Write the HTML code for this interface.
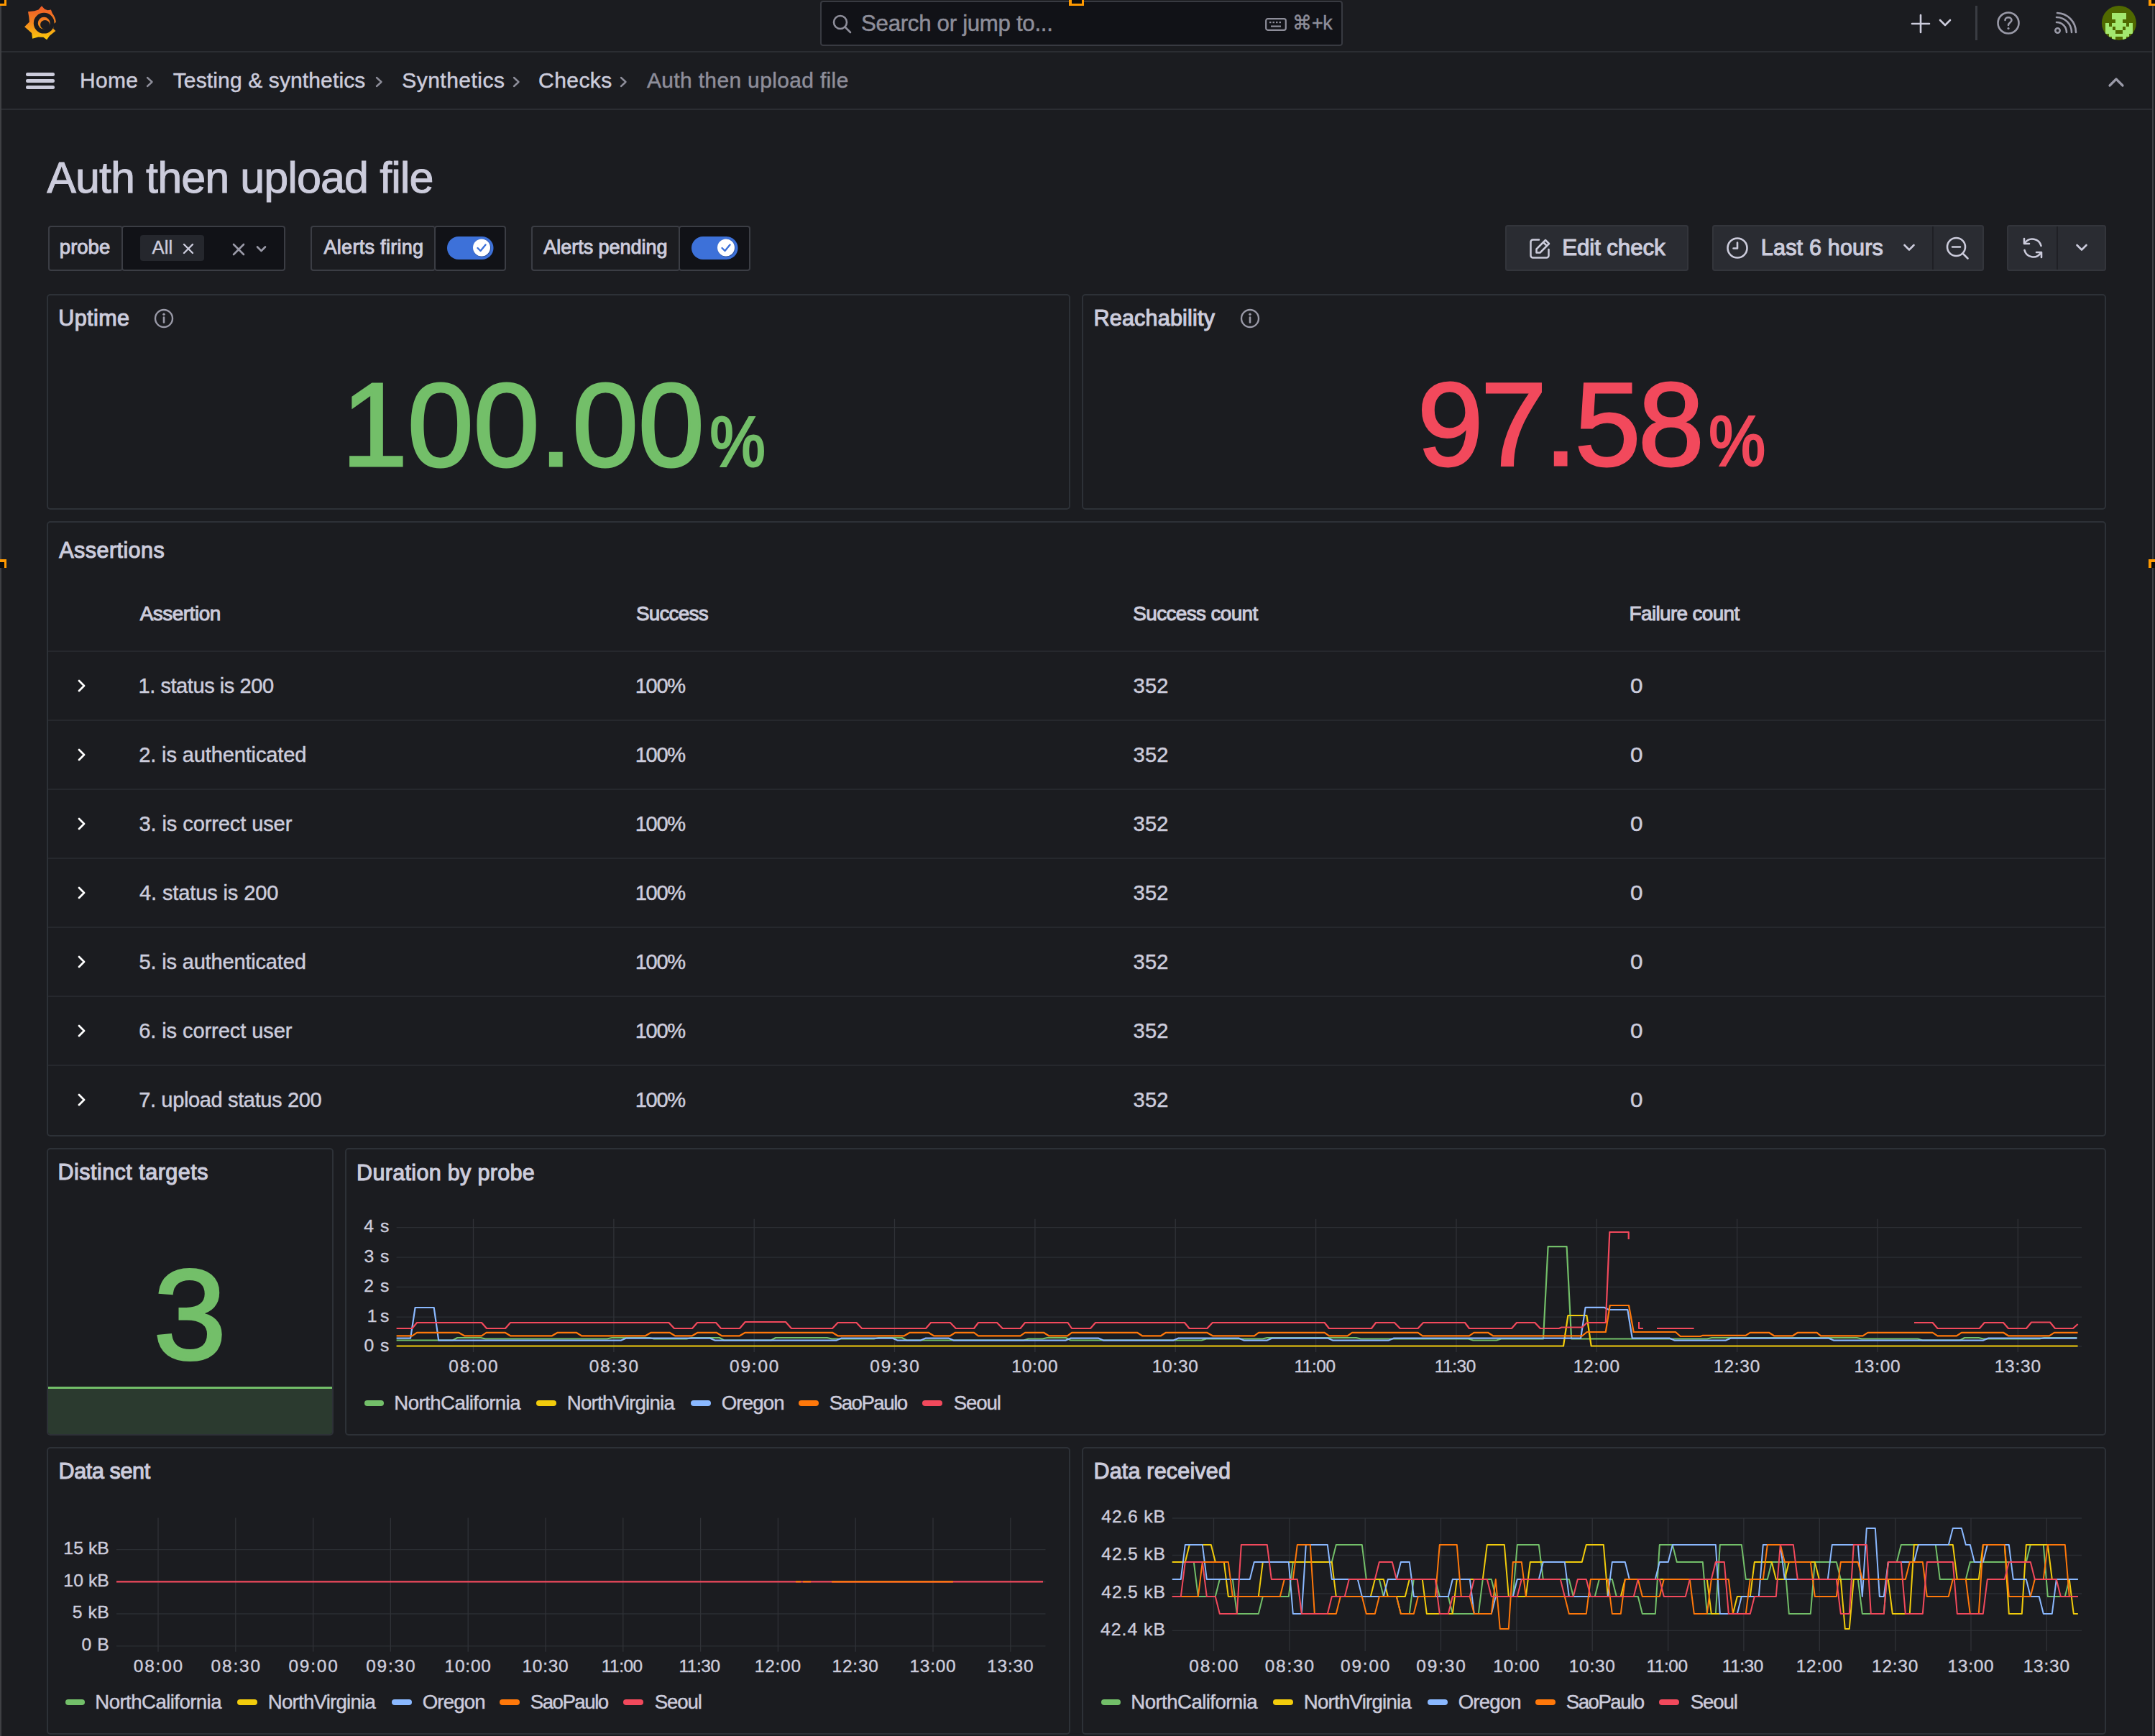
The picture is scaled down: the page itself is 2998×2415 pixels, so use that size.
<!DOCTYPE html><html><head><meta charset="utf-8"><style>
html,body{margin:0;padding:0;}
body{width:2998px;height:2415px;overflow:hidden;background:#1b1c20;position:relative;font-family:"Liberation Sans",sans-serif;}
.t{position:absolute;white-space:nowrap;line-height:1;}
.b{position:absolute;box-sizing:border-box;}
.s{position:absolute;overflow:visible;}
</style></head><body>
<div class="b" style="left:0.0px;top:0.0px;width:2.0px;height:2415.0px;background:#3f4044;"></div>
<div class="b" style="left:2994.0px;top:0.0px;width:2.0px;height:2415.0px;background:#3f4044;"></div>
<div class="b" style="left:2.0px;top:70.5px;width:2992.0px;height:2.0px;background:#2b2d32;"></div>
<div class="b" style="left:2.0px;top:150.5px;width:2992.0px;height:2.0px;background:#2b2d32;"></div>
<svg class="s" style="left:28.0px;top:4.0px;" width="56.0" height="56.0" viewBox="0 0 56.0 56.0"><defs><linearGradient id="lg" x1="0" y1="0" x2="0" y2="1"><stop offset="0" stop-color="#f05a28"/><stop offset="0.45" stop-color="#f38020"/><stop offset="1" stop-color="#fbca0a"/></linearGradient></defs>
<path fill="url(#lg)" d="M30 4.2 L34.2 8.7 L38.4 10.3 L42.9 9.4 L44.8 14.5 C47.5 18 49.5 22 49.8 26.8 L46.6 29.5 L46.2 36 L49.4 39 L41 45.8 L37.1 51.3 L32.3 47.7 L25.2 47.4 L17.1 49.7 L16.1 42 L6.1 33.2 L12.9 26.5 L12.3 20 L11 12.3 L20 11.3 L25.5 9.4 Z"/>
<circle cx="33.2" cy="28.2" r="11.4" fill="none" stroke="#1b1c20" stroke-width="6"/>
<circle cx="34.6" cy="30.4" r="6.5" fill="#1b1c20"/>
<path d="M36.5 37.5 L40 34" stroke="#1b1c20" stroke-width="1.6"/></svg>
<div class="b" style="left:36.0px;top:101.0px;width:40.0px;height:4.5px;background:#ccccdc;border-radius:2.2px;"></div>
<div class="b" style="left:36.0px;top:110.0px;width:40.0px;height:4.5px;background:#ccccdc;border-radius:2.2px;"></div>
<div class="b" style="left:36.0px;top:119.0px;width:40.0px;height:4.5px;background:#ccccdc;border-radius:2.2px;"></div>
<div class="b" style="left:1141.0px;top:0.5px;width:727.0px;height:63.0px;background:#111217;box-shadow:inset 0 0 0 2.0px #383a41;border-radius:4.0px;"></div>
<svg class="s" style="left:1158.0px;top:20.0px;" width="30.0" height="26.0" viewBox="0 0 30.0 26.0"><circle cx="11" cy="11" r="9" fill="none" stroke="#8e8e9a" stroke-width="2.6"/><line x1="17.5" y1="17.5" x2="25" y2="25" stroke="#8e8e9a" stroke-width="2.6" stroke-linecap="round"/></svg>
<div class="t" style="left:1198.08px;top:17.04px;font-size:31.25px;color:#8e8e9a;letter-spacing:-0.311px;-webkit-text-stroke:0.50px #8e8e9a;">Search or jump to...</div>
<svg class="s" style="left:1760.0px;top:25.0px;" width="30.0" height="18.0" viewBox="0 0 30.0 18.0"><rect x="1.2" y="1.2" width="27.6" height="15.6" rx="2.5" fill="none" stroke="#8e8e9a" stroke-width="2.2"/><g fill="#8e8e9a"><rect x="6" y="5" width="2.5" height="2.2"/><rect x="10.5" y="5" width="2.5" height="2.2"/><rect x="15" y="5" width="2.5" height="2.2"/><rect x="19.5" y="5" width="2.5" height="2.2"/><rect x="8" y="10.5" width="14" height="2.2"/></g></svg>
<div class="t" style="left:1798.31px;top:19.24px;font-size:26.89px;color:#8e8e9a;letter-spacing:-0.331px;-webkit-text-stroke:0.43px #8e8e9a;">⌘+k</div>
<div class="b" style="left:1487.0px;top:0.0px;width:21.0px;height:8.0px;background:#ff9900;"></div>
<div class="b" style="left:2989.0px;top:0.0px;width:9.0px;height:8.0px;background:#ff9900;"></div>
<div class="b" style="left:2992.5px;top:0.0px;width:5.5px;height:4.5px;background:#0c0c0c;"></div>
<div class="b" style="left:1490.5px;top:0.0px;width:14.0px;height:4.5px;background:#0c0c0c;"></div>
<div class="b" style="left:0.0px;top:0.0px;width:9.0px;height:8.0px;background:#ff9900;"></div>
<div class="b" style="left:0.0px;top:0.0px;width:5.5px;height:4.5px;background:#0c0c0c;"></div>
<div class="b" style="left:0.0px;top:778.0px;width:9.0px;height:12.0px;background:#ff9900;"></div>
<div class="b" style="left:0.0px;top:781.5px;width:5.5px;height:8.5px;background:#0c0c0c;"></div>
<div class="b" style="left:2989.0px;top:778.0px;width:9.0px;height:12.0px;background:#ff9900;"></div>
<div class="b" style="left:2992.5px;top:781.5px;width:5.5px;height:8.5px;background:#0c0c0c;"></div>
<svg class="s" style="left:2658.0px;top:19.0px;" width="28.0" height="28.0" viewBox="0 0 28.0 28.0"><path d="M14 2 V26 M2 14 H26" stroke="#ccccdc" stroke-width="2.6" stroke-linecap="round"/></svg>
<svg class="s" style="left:2697.0px;top:26.0px;" width="18.0" height="12.0" viewBox="0 0 18.0 12.0"><path d="M2 2 L9 9 L16 2" fill="none" stroke="#ccccdc" stroke-width="2.6" stroke-linecap="round" stroke-linejoin="round"/></svg>
<div class="b" style="left:2748.0px;top:8.0px;width:2.5px;height:48.0px;background:#3a3c42;"></div>
<svg class="s" style="left:2777.0px;top:15.0px;" width="34.0" height="34.0" viewBox="0 0 34.0 34.0"><circle cx="17" cy="17" r="14.5" fill="none" stroke="#9a9aa8" stroke-width="2.6"/><path d="M12.5 13 C12.5 8 21.5 8 21.5 13 C21.5 16.5 17 16.5 17 20" fill="none" stroke="#9a9aa8" stroke-width="2.6" stroke-linecap="round"/><circle cx="17" cy="24.5" r="1.6" fill="#9a9aa8"/></svg>
<svg class="s" style="left:2857.0px;top:19.0px;" width="32.0" height="30.0" viewBox="0 0 32.0 30.0"><circle cx="5.5" cy="23.5" r="3.2" fill="none" stroke="#9a9aa8" stroke-width="2.6"/><path d="M4 12 A14 14 0 0 1 18 26 M4 5 A21 21 0 0 1 25 26 M5 -1 A27 27 0 0 1 31 26" fill="none" stroke="#9a9aa8" stroke-width="2.6" stroke-linecap="round"/></svg>
<svg class="s" style="left:2918.0px;top:4.0px;" width="60.0" height="56.0" viewBox="0 0 60.0 56.0"><clipPath id="av"><circle cx="29.9" cy="27.9" r="24"/></clipPath><g clip-path="url(#av)"><rect width="60" height="56" fill="#506900"/><g fill="#a3e86f" shape-rendering="crispEdges"><rect x="20.44" y="13.50" width="4.86" height="4.94"/><rect x="25.20" y="13.50" width="4.86" height="4.94"/><rect x="29.96" y="13.50" width="4.86" height="4.94"/><rect x="34.72" y="13.50" width="4.86" height="4.94"/><rect x="20.44" y="18.34" width="4.86" height="4.94"/><rect x="25.20" y="18.34" width="4.86" height="4.94"/><rect x="29.96" y="18.34" width="4.86" height="4.94"/><rect x="34.72" y="18.34" width="4.86" height="4.94"/><rect x="25.20" y="23.18" width="4.86" height="4.94"/><rect x="29.96" y="23.18" width="4.86" height="4.94"/><rect x="10.92" y="28.02" width="4.86" height="4.94"/><rect x="20.44" y="28.02" width="4.86" height="4.94"/><rect x="25.20" y="28.02" width="4.86" height="4.94"/><rect x="29.96" y="28.02" width="4.86" height="4.94"/><rect x="34.72" y="28.02" width="4.86" height="4.94"/><rect x="44.24" y="28.02" width="4.86" height="4.94"/><rect x="10.92" y="32.86" width="4.86" height="4.94"/><rect x="15.68" y="32.86" width="4.86" height="4.94"/><rect x="25.20" y="32.86" width="4.86" height="4.94"/><rect x="29.96" y="32.86" width="4.86" height="4.94"/><rect x="39.48" y="32.86" width="4.86" height="4.94"/><rect x="44.24" y="32.86" width="4.86" height="4.94"/><rect x="10.92" y="37.70" width="4.86" height="4.94"/><rect x="15.68" y="37.70" width="4.86" height="4.94"/><rect x="20.44" y="37.70" width="4.86" height="4.94"/><rect x="34.72" y="37.70" width="4.86" height="4.94"/><rect x="39.48" y="37.70" width="4.86" height="4.94"/><rect x="44.24" y="37.70" width="4.86" height="4.94"/><rect x="15.68" y="42.54" width="4.86" height="4.94"/><rect x="20.44" y="42.54" width="4.86" height="4.94"/><rect x="25.20" y="42.54" width="4.86" height="4.94"/><rect x="29.96" y="42.54" width="4.86" height="4.94"/><rect x="34.72" y="42.54" width="4.86" height="4.94"/><rect x="39.48" y="42.54" width="4.86" height="4.94"/><rect x="20.44" y="47.38" width="4.86" height="4.94"/><rect x="34.72" y="47.38" width="4.86" height="4.94"/></g></g></svg>
<svg class="s" style="left:2932.0px;top:106.0px;" width="24.0" height="16.0" viewBox="0 0 24.0 16.0"><path d="M3 13 L12 4 L21 13" fill="none" stroke="#9a9aa8" stroke-width="3.2" stroke-linecap="round" stroke-linejoin="round"/></svg>
<div class="t" style="left:110.94px;top:96.95px;font-size:29.94px;color:#ccccdc;letter-spacing:0.339px;-webkit-text-stroke:0.48px #ccccdc;">Home</div>
<div class="t" style="left:240.73px;top:96.95px;font-size:29.94px;color:#ccccdc;letter-spacing:0.159px;-webkit-text-stroke:0.48px #ccccdc;">Testing &amp; synthetics</div>
<div class="t" style="left:559.24px;top:96.95px;font-size:29.94px;color:#ccccdc;letter-spacing:0.501px;-webkit-text-stroke:0.48px #ccccdc;">Synthetics</div>
<div class="t" style="left:749.08px;top:96.95px;font-size:29.94px;color:#ccccdc;letter-spacing:0.472px;-webkit-text-stroke:0.48px #ccccdc;">Checks</div>
<div class="t" style="left:899.94px;top:96.95px;font-size:29.94px;color:#8e8e9a;letter-spacing:0.369px;-webkit-text-stroke:0.48px #8e8e9a;">Auth then upload file</div>
<svg class="s" style="left:202.6px;top:106.0px;" width="12.0" height="16.0" viewBox="0 0 12.0 16.0"><path d="M2 2 L8.5 8 L2 14" fill="none" stroke="#8e8e9a" stroke-width="2.4" stroke-linecap="round" stroke-linejoin="round"/></svg>
<svg class="s" style="left:522.0px;top:106.0px;" width="12.0" height="16.0" viewBox="0 0 12.0 16.0"><path d="M2 2 L8.5 8 L2 14" fill="none" stroke="#8e8e9a" stroke-width="2.4" stroke-linecap="round" stroke-linejoin="round"/></svg>
<svg class="s" style="left:712.8px;top:106.0px;" width="12.0" height="16.0" viewBox="0 0 12.0 16.0"><path d="M2 2 L8.5 8 L2 14" fill="none" stroke="#8e8e9a" stroke-width="2.4" stroke-linecap="round" stroke-linejoin="round"/></svg>
<svg class="s" style="left:861.8px;top:106.0px;" width="12.0" height="16.0" viewBox="0 0 12.0 16.0"><path d="M2 2 L8.5 8 L2 14" fill="none" stroke="#8e8e9a" stroke-width="2.4" stroke-linecap="round" stroke-linejoin="round"/></svg>
<div class="t" style="left:65.18px;top:217.32px;font-size:61.05px;color:#ccccdc;letter-spacing:-0.920px;-webkit-text-stroke:0.98px #ccccdc;">Auth then upload file</div>
<div class="b" style="left:67.0px;top:314.0px;width:104.0px;height:62.5px;background:#1b1c20;box-shadow:inset 0 0 0 2.0px #3b3d44;border-radius:4.0px;"></div>
<div class="b" style="left:169.0px;top:314.0px;width:228.0px;height:62.5px;background:#111217;box-shadow:inset 0 0 0 2.0px #3b3d44;border-radius:4.0px;"></div>
<div class="t" style="left:82.83px;top:330.22px;font-size:27.50px;color:#ccccdc;letter-spacing:0.015px;-webkit-text-stroke:0.99px #ccccdc;">probe</div>
<div class="b" style="left:195.3px;top:327.0px;width:88.4px;height:36.0px;background:#25272d;border-radius:4.0px;"></div>
<div class="t" style="left:211.45px;top:331.64px;font-size:25.58px;color:#ccccdc;letter-spacing:0.166px;-webkit-text-stroke:0.41px #ccccdc;">All</div>
<svg class="s" style="left:253.0px;top:337.0px;" width="18.0" height="18.0" viewBox="0 0 18.0 18.0"><path d="M3 3 L15 15 M15 3 L3 15" stroke="#ccccdc" stroke-width="2.4" stroke-linecap="round"/></svg>
<svg class="s" style="left:322.0px;top:337.0px;" width="20.0" height="20.0" viewBox="0 0 20.0 20.0"><path d="M3 3 L17 17 M17 3 L3 17" stroke="#9a9aa8" stroke-width="2.6" stroke-linecap="round"/></svg>
<svg class="s" style="left:355.0px;top:341.0px;" width="18.0" height="13.0" viewBox="0 0 18.0 13.0"><path d="M3 2.5 L8.5 8 L14 2.5" fill="none" stroke="#9a9aa8" stroke-width="2.6" stroke-linecap="round" stroke-linejoin="round"/></svg>
<div class="b" style="left:432.3px;top:314.0px;width:173.7px;height:62.5px;background:#1b1c20;box-shadow:inset 0 0 0 2.0px #3b3d44;border-radius:4.0px;"></div>
<div class="b" style="left:604.0px;top:314.0px;width:99.5px;height:62.5px;background:#111217;box-shadow:inset 0 0 0 2.0px #3b3d44;border-radius:4.0px;"></div>
<div class="t" style="left:450.45px;top:330.51px;font-size:27.03px;color:#ccccdc;letter-spacing:0.298px;-webkit-text-stroke:0.97px #ccccdc;">Alerts firing</div>
<svg class="s" style="left:621.8px;top:328.0px;" width="68.0" height="36.0" viewBox="0 0 68.0 36.0"><rect x="0" y="1" width="64.5" height="32" rx="16" fill="#3d71d9"/><circle cx="48.5" cy="17" r="12.5" fill="#1f3a73" opacity="0.6"/><circle cx="48" cy="16.5" r="12" fill="#ffffff"/><path d="M42.5 17 L46.5 21 L53.5 12.5" fill="none" stroke="#3d71d9" stroke-width="2.4" stroke-linecap="round" stroke-linejoin="round"/></svg>
<div class="b" style="left:738.7px;top:314.0px;width:207.3px;height:62.5px;background:#1b1c20;box-shadow:inset 0 0 0 2.0px #3b3d44;border-radius:4.0px;"></div>
<div class="b" style="left:944.0px;top:314.0px;width:100.0px;height:62.5px;background:#111217;box-shadow:inset 0 0 0 2.0px #3b3d44;border-radius:4.0px;"></div>
<div class="t" style="left:756.35px;top:330.51px;font-size:27.03px;color:#ccccdc;letter-spacing:-0.049px;-webkit-text-stroke:0.97px #ccccdc;">Alerts pending</div>
<svg class="s" style="left:961.9px;top:328.0px;" width="68.0" height="36.0" viewBox="0 0 68.0 36.0"><rect x="0" y="1" width="64.5" height="32" rx="16" fill="#3d71d9"/><circle cx="48.5" cy="17" r="12.5" fill="#1f3a73" opacity="0.6"/><circle cx="48" cy="16.5" r="12" fill="#ffffff"/><path d="M42.5 17 L46.5 21 L53.5 12.5" fill="none" stroke="#3d71d9" stroke-width="2.4" stroke-linecap="round" stroke-linejoin="round"/></svg>
<div class="b" style="left:2094.3px;top:313.3px;width:254.7px;height:63.4px;background:#2a2c32;box-shadow:inset 0 0 0 2.0px #33353b;border-radius:4.0px;"></div>
<svg class="s" style="left:2127.0px;top:330.0px;" width="31.0" height="31.0" viewBox="0 0 31.0 31.0"><path d="M14 3.5 H5.5 A3 3 0 0 0 2.5 6.5 V25.5 A3 3 0 0 0 5.5 28.5 H24.5 A3 3 0 0 0 27.5 25.5 V17" fill="none" stroke="#ccccdc" stroke-width="2.5" stroke-linecap="round"/><path d="M10.5 16.5 L23 4 L28 9 L15.5 21.5 H10.5 Z M20 7 L25 12" fill="none" stroke="#ccccdc" stroke-width="2.5" stroke-linejoin="round"/></svg>
<div class="t" style="left:2173.34px;top:328.84px;font-size:31.25px;color:#ccccdc;letter-spacing:-0.105px;-webkit-text-stroke:1.12px #ccccdc;">Edit check</div>
<div class="b" style="left:2381.6px;top:313.3px;width:378.4px;height:63.4px;background:#2a2c32;box-shadow:inset 0 0 0 2.0px #33353b;border-radius:4.0px;"></div>
<div class="b" style="left:2688.0px;top:315.0px;width:2.0px;height:60.0px;background:#1f2025;"></div>
<svg class="s" style="left:2401.0px;top:329.0px;" width="32.0" height="32.0" viewBox="0 0 32.0 32.0"><circle cx="16" cy="16" r="13.5" fill="none" stroke="#ccccdc" stroke-width="2.6"/><path d="M16 8.5 V16.5 H10.5" fill="none" stroke="#ccccdc" stroke-width="2.6" stroke-linecap="round" stroke-linejoin="round"/></svg>
<div class="t" style="left:2449.80px;top:328.96px;font-size:30.52px;color:#ccccdc;letter-spacing:0.193px;-webkit-text-stroke:1.10px #ccccdc;">Last 6 hours</div>
<svg class="s" style="left:2647.0px;top:338.0px;" width="18.0" height="14.0" viewBox="0 0 18.0 14.0"><path d="M2.5 3 L9 9.5 L15.5 3" fill="none" stroke="#ccccdc" stroke-width="2.6" stroke-linecap="round" stroke-linejoin="round"/></svg>
<svg class="s" style="left:2706.0px;top:328.0px;" width="36.0" height="36.0" viewBox="0 0 36.0 36.0"><circle cx="15.5" cy="15.5" r="12.5" fill="none" stroke="#ccccdc" stroke-width="2.6"/><path d="M10 15.5 H21 M24.5 24.5 L31.5 31.5" stroke="#ccccdc" stroke-width="2.6" stroke-linecap="round"/></svg>
<div class="b" style="left:2792.4px;top:313.3px;width:137.6px;height:63.4px;background:#2a2c32;box-shadow:inset 0 0 0 2.0px #33353b;border-radius:4.0px;"></div>
<div class="b" style="left:2861.0px;top:315.0px;width:2.0px;height:60.0px;background:#1f2025;"></div>
<svg class="s" style="left:2811.0px;top:328.0px;" width="34.0" height="34.0" viewBox="0 0 34.0 34.0"><path d="M28.5 14 A12.5 12.5 0 0 0 6 10 M5.5 20 A12.5 12.5 0 0 0 28 24" fill="none" stroke="#ccccdc" stroke-width="2.6" stroke-linecap="round"/><path d="M5 4 V11 H12 M29 30 V23 H22" fill="none" stroke="#ccccdc" stroke-width="2.6" stroke-linecap="round" stroke-linejoin="round"/></svg>
<svg class="s" style="left:2887.0px;top:338.0px;" width="18.0" height="14.0" viewBox="0 0 18.0 14.0"><path d="M2.5 3 L9 9.5 L15.5 3" fill="none" stroke="#ccccdc" stroke-width="2.6" stroke-linecap="round" stroke-linejoin="round"/></svg>
<div class="b" style="left:65.0px;top:409.0px;width:1424.0px;height:300.0px;background:#1b1c20;box-shadow:inset 0 0 0 2.0px #2d3137;border-radius:5.0px;"></div>
<div class="b" style="left:1505.0px;top:409.0px;width:1425.0px;height:300.0px;background:#1b1c20;box-shadow:inset 0 0 0 2.0px #2d3137;border-radius:5.0px;"></div>
<div class="b" style="left:65.0px;top:725.0px;width:2865.0px;height:856.0px;background:#1b1c20;box-shadow:inset 0 0 0 2.0px #2d3137;border-radius:5.0px;"></div>
<div class="b" style="left:65.0px;top:1597.0px;width:399.0px;height:400.0px;background:#1b1c20;box-shadow:inset 0 0 0 2.0px #2d3137;border-radius:5.0px;"></div>
<div class="b" style="left:480.0px;top:1597.0px;width:2450.0px;height:400.0px;background:#1b1c20;box-shadow:inset 0 0 0 2.0px #2d3137;border-radius:5.0px;"></div>
<div class="b" style="left:65.0px;top:2013.0px;width:1424.0px;height:400.0px;background:#1b1c20;box-shadow:inset 0 0 0 2.0px #2d3137;border-radius:5.0px;"></div>
<div class="b" style="left:1505.0px;top:2013.0px;width:1425.0px;height:400.0px;background:#1b1c20;box-shadow:inset 0 0 0 2.0px #2d3137;border-radius:5.0px;"></div>
<div class="t" style="left:81.35px;top:427.36px;font-size:30.52px;color:#ccccdc;letter-spacing:0.386px;-webkit-text-stroke:1.10px #ccccdc;">Uptime</div>
<div class="t" style="left:1521.50px;top:427.36px;font-size:30.52px;color:#ccccdc;letter-spacing:0.209px;-webkit-text-stroke:1.10px #ccccdc;">Reachability</div>
<svg class="s" style="left:212.8px;top:427.7px;" width="30.0" height="30.0" viewBox="0 0 30.0 30.0"><circle cx="15" cy="15" r="12" fill="none" stroke="#9a9aa8" stroke-width="2.4"/><path d="M15 13.5 V20.5" stroke="#9a9aa8" stroke-width="2.6" stroke-linecap="round"/><circle cx="15" cy="9.3" r="1.7" fill="#9a9aa8"/></svg>
<svg class="s" style="left:1724.0px;top:428.0px;" width="30.0" height="30.0" viewBox="0 0 30.0 30.0"><circle cx="15" cy="15" r="12" fill="none" stroke="#9a9aa8" stroke-width="2.4"/><path d="M15 13.5 V20.5" stroke="#9a9aa8" stroke-width="2.6" stroke-linecap="round"/><circle cx="15" cy="9.3" r="1.7" fill="#9a9aa8"/></svg>
<div class="t" style="left:474.88px;top:508.22px;font-size:165.70px;color:#73bf69;letter-spacing:-0.342px;-webkit-text-stroke:3.00px #73bf69;">100.00</div>
<div class="t" style="left:987.03px;top:566.05px;font-size:97.38px;color:#73bf69;transform:scaleX(0.8914);transform-origin:3.47px 0;-webkit-text-stroke:3.00px #73bf69;">%</div>
<div class="t" style="left:1971.77px;top:507.84px;font-size:164.97px;color:#f2495c;letter-spacing:-3.482px;-webkit-text-stroke:3.00px #f2495c;">97.58</div>
<div class="t" style="left:2377.03px;top:565.05px;font-size:97.38px;color:#f2495c;transform:scaleX(0.9103);transform-origin:3.47px 0;-webkit-text-stroke:3.00px #f2495c;">%</div>
<div class="t" style="left:82.34px;top:749.66px;font-size:30.52px;color:#ccccdc;letter-spacing:0.430px;-webkit-text-stroke:1.10px #ccccdc;">Assertions</div>
<div class="t" style="left:194.65px;top:840.07px;font-size:27.91px;color:#ccccdc;letter-spacing:-0.470px;-webkit-text-stroke:1.00px #ccccdc;">Assertion</div>
<div class="t" style="left:884.93px;top:840.07px;font-size:27.91px;color:#ccccdc;letter-spacing:-0.799px;-webkit-text-stroke:1.00px #ccccdc;">Success</div>
<div class="t" style="left:1576.33px;top:840.07px;font-size:27.91px;color:#ccccdc;letter-spacing:-0.635px;-webkit-text-stroke:1.00px #ccccdc;">Success count</div>
<div class="t" style="left:2266.61px;top:840.07px;font-size:27.91px;color:#ccccdc;letter-spacing:-0.644px;-webkit-text-stroke:1.00px #ccccdc;">Failure count</div>
<div class="b" style="left:67.0px;top:904.8px;width:2861.0px;height:2.0px;background:#26282d;"></div>
<div class="t" style="left:192.49px;top:939.89px;font-size:29.07px;color:#ccccdc;letter-spacing:-0.458px;-webkit-text-stroke:0.47px #ccccdc;">1. status is 200</div>
<div class="t" style="left:883.79px;top:939.89px;font-size:29.07px;color:#ccccdc;letter-spacing:-1.366px;-webkit-text-stroke:0.47px #ccccdc;">100%</div>
<div class="t" style="left:1576.49px;top:939.89px;font-size:29.07px;color:#ccccdc;letter-spacing:0.234px;-webkit-text-stroke:0.47px #ccccdc;">352</div>
<div class="t" style="left:2267.86px;top:939.89px;font-size:29.07px;color:#ccccdc;transform:scaleX(1.0794);transform-origin:1.14px 0;-webkit-text-stroke:0.47px #ccccdc;">0</div>
<svg class="s" style="left:106.0px;top:944.0px;" width="16.0" height="20.0" viewBox="0 0 16.0 20.0"><path d="M4 3 L11 10 L4 17" fill="none" stroke="#ffffff" stroke-width="2.8" stroke-linecap="round" stroke-linejoin="round"/></svg>
<div class="b" style="left:67.0px;top:1000.8px;width:2861.0px;height:2.0px;background:#26282d;"></div>
<div class="t" style="left:193.24px;top:1035.89px;font-size:29.07px;color:#ccccdc;letter-spacing:-0.151px;-webkit-text-stroke:0.47px #ccccdc;">2. is authenticated</div>
<div class="t" style="left:883.79px;top:1035.89px;font-size:29.07px;color:#ccccdc;letter-spacing:-1.366px;-webkit-text-stroke:0.47px #ccccdc;">100%</div>
<div class="t" style="left:1576.49px;top:1035.89px;font-size:29.07px;color:#ccccdc;letter-spacing:0.234px;-webkit-text-stroke:0.47px #ccccdc;">352</div>
<div class="t" style="left:2267.86px;top:1035.89px;font-size:29.07px;color:#ccccdc;transform:scaleX(1.0794);transform-origin:1.14px 0;-webkit-text-stroke:0.47px #ccccdc;">0</div>
<svg class="s" style="left:106.0px;top:1040.0px;" width="16.0" height="20.0" viewBox="0 0 16.0 20.0"><path d="M4 3 L11 10 L4 17" fill="none" stroke="#ffffff" stroke-width="2.8" stroke-linecap="round" stroke-linejoin="round"/></svg>
<div class="b" style="left:67.0px;top:1096.8px;width:2861.0px;height:2.0px;background:#26282d;"></div>
<div class="t" style="left:193.59px;top:1131.89px;font-size:29.07px;color:#ccccdc;letter-spacing:-0.122px;-webkit-text-stroke:0.47px #ccccdc;">3. is correct user</div>
<div class="t" style="left:883.79px;top:1131.89px;font-size:29.07px;color:#ccccdc;letter-spacing:-1.366px;-webkit-text-stroke:0.47px #ccccdc;">100%</div>
<div class="t" style="left:1576.49px;top:1131.89px;font-size:29.07px;color:#ccccdc;letter-spacing:0.234px;-webkit-text-stroke:0.47px #ccccdc;">352</div>
<div class="t" style="left:2267.86px;top:1131.89px;font-size:29.07px;color:#ccccdc;transform:scaleX(1.0794);transform-origin:1.14px 0;-webkit-text-stroke:0.47px #ccccdc;">0</div>
<svg class="s" style="left:106.0px;top:1136.0px;" width="16.0" height="20.0" viewBox="0 0 16.0 20.0"><path d="M4 3 L11 10 L4 17" fill="none" stroke="#ffffff" stroke-width="2.8" stroke-linecap="round" stroke-linejoin="round"/></svg>
<div class="b" style="left:67.0px;top:1192.8px;width:2861.0px;height:2.0px;background:#26282d;"></div>
<div class="t" style="left:194.03px;top:1227.89px;font-size:29.07px;color:#ccccdc;letter-spacing:-0.142px;-webkit-text-stroke:0.47px #ccccdc;">4. status is 200</div>
<div class="t" style="left:883.79px;top:1227.89px;font-size:29.07px;color:#ccccdc;letter-spacing:-1.366px;-webkit-text-stroke:0.47px #ccccdc;">100%</div>
<div class="t" style="left:1576.49px;top:1227.89px;font-size:29.07px;color:#ccccdc;letter-spacing:0.234px;-webkit-text-stroke:0.47px #ccccdc;">352</div>
<div class="t" style="left:2267.86px;top:1227.89px;font-size:29.07px;color:#ccccdc;transform:scaleX(1.0794);transform-origin:1.14px 0;-webkit-text-stroke:0.47px #ccccdc;">0</div>
<svg class="s" style="left:106.0px;top:1232.0px;" width="16.0" height="20.0" viewBox="0 0 16.0 20.0"><path d="M4 3 L11 10 L4 17" fill="none" stroke="#ffffff" stroke-width="2.8" stroke-linecap="round" stroke-linejoin="round"/></svg>
<div class="b" style="left:67.0px;top:1288.8px;width:2861.0px;height:2.0px;background:#26282d;"></div>
<div class="t" style="left:193.54px;top:1323.89px;font-size:29.07px;color:#ccccdc;letter-spacing:-0.201px;-webkit-text-stroke:0.47px #ccccdc;">5. is authenticated</div>
<div class="t" style="left:883.79px;top:1323.89px;font-size:29.07px;color:#ccccdc;letter-spacing:-1.366px;-webkit-text-stroke:0.47px #ccccdc;">100%</div>
<div class="t" style="left:1576.49px;top:1323.89px;font-size:29.07px;color:#ccccdc;letter-spacing:0.234px;-webkit-text-stroke:0.47px #ccccdc;">352</div>
<div class="t" style="left:2267.86px;top:1323.89px;font-size:29.07px;color:#ccccdc;transform:scaleX(1.0794);transform-origin:1.14px 0;-webkit-text-stroke:0.47px #ccccdc;">0</div>
<svg class="s" style="left:106.0px;top:1328.0px;" width="16.0" height="20.0" viewBox="0 0 16.0 20.0"><path d="M4 3 L11 10 L4 17" fill="none" stroke="#ffffff" stroke-width="2.8" stroke-linecap="round" stroke-linejoin="round"/></svg>
<div class="b" style="left:67.0px;top:1384.8px;width:2861.0px;height:2.0px;background:#26282d;"></div>
<div class="t" style="left:193.22px;top:1419.89px;font-size:29.07px;color:#ccccdc;letter-spacing:-0.094px;-webkit-text-stroke:0.47px #ccccdc;">6. is correct user</div>
<div class="t" style="left:883.79px;top:1419.89px;font-size:29.07px;color:#ccccdc;letter-spacing:-1.366px;-webkit-text-stroke:0.47px #ccccdc;">100%</div>
<div class="t" style="left:1576.49px;top:1419.89px;font-size:29.07px;color:#ccccdc;letter-spacing:0.234px;-webkit-text-stroke:0.47px #ccccdc;">352</div>
<div class="t" style="left:2267.86px;top:1419.89px;font-size:29.07px;color:#ccccdc;transform:scaleX(1.0794);transform-origin:1.14px 0;-webkit-text-stroke:0.47px #ccccdc;">0</div>
<svg class="s" style="left:106.0px;top:1424.0px;" width="16.0" height="20.0" viewBox="0 0 16.0 20.0"><path d="M4 3 L11 10 L4 17" fill="none" stroke="#ffffff" stroke-width="2.8" stroke-linecap="round" stroke-linejoin="round"/></svg>
<div class="b" style="left:67.0px;top:1480.8px;width:2861.0px;height:2.0px;background:#26282d;"></div>
<div class="t" style="left:193.21px;top:1515.89px;font-size:29.07px;color:#ccccdc;letter-spacing:-0.384px;-webkit-text-stroke:0.47px #ccccdc;">7. upload status 200</div>
<div class="t" style="left:883.79px;top:1515.89px;font-size:29.07px;color:#ccccdc;letter-spacing:-1.366px;-webkit-text-stroke:0.47px #ccccdc;">100%</div>
<div class="t" style="left:1576.49px;top:1515.89px;font-size:29.07px;color:#ccccdc;letter-spacing:0.234px;-webkit-text-stroke:0.47px #ccccdc;">352</div>
<div class="t" style="left:2267.86px;top:1515.89px;font-size:29.07px;color:#ccccdc;transform:scaleX(1.0794);transform-origin:1.14px 0;-webkit-text-stroke:0.47px #ccccdc;">0</div>
<svg class="s" style="left:106.0px;top:1520.0px;" width="16.0" height="20.0" viewBox="0 0 16.0 20.0"><path d="M4 3 L11 10 L4 17" fill="none" stroke="#ffffff" stroke-width="2.8" stroke-linecap="round" stroke-linejoin="round"/></svg>
<div class="t" style="left:80.40px;top:1615.46px;font-size:30.52px;color:#ccccdc;letter-spacing:0.483px;-webkit-text-stroke:1.10px #ccccdc;">Distinct targets</div>
<div class="t" style="left:214.25px;top:1740.38px;font-size:177.33px;color:#73bf69;transform:scaleX(1.0229);transform-origin:6.75px 0;-webkit-text-stroke:4.00px #73bf69;">3</div>
<div class="b" style="left:67.0px;top:1931.0px;width:395.0px;height:64.0px;background:#2b3a2f;border-bottom-left-radius:3px;border-bottom-right-radius:3px;"></div>
<div class="b" style="left:67.0px;top:1929.0px;width:395.0px;height:2.5px;background:#73bf69;"></div>
<div class="t" style="left:496.10px;top:1616.16px;font-size:30.52px;color:#ccccdc;letter-spacing:0.314px;-webkit-text-stroke:1.10px #ccccdc;">Duration by probe</div>
<svg class="s" style="left:0;top:0" width="2998" height="2415"><line x1="551.6" y1="1707.6" x2="2896.0" y2="1707.6" stroke="#2b2e33" stroke-width="1.3"/><line x1="551.6" y1="1749.2" x2="2896.0" y2="1749.2" stroke="#2b2e33" stroke-width="1.3"/><line x1="551.6" y1="1790.4" x2="2896.0" y2="1790.4" stroke="#2b2e33" stroke-width="1.3"/><line x1="551.6" y1="1832.2" x2="2896.0" y2="1832.2" stroke="#2b2e33" stroke-width="1.3"/><line x1="551.6" y1="1872.8" x2="2896.0" y2="1872.8" stroke="#2b2e33" stroke-width="1.3"/><line x1="658.5" y1="1695.8" x2="658.5" y2="1881.0" stroke="#303237" stroke-width="1.3"/><line x1="853.9" y1="1695.8" x2="853.9" y2="1881.0" stroke="#303237" stroke-width="1.3"/><line x1="1049.2" y1="1695.8" x2="1049.2" y2="1881.0" stroke="#303237" stroke-width="1.3"/><line x1="1244.5" y1="1695.8" x2="1244.5" y2="1881.0" stroke="#303237" stroke-width="1.3"/><line x1="1439.9" y1="1695.8" x2="1439.9" y2="1881.0" stroke="#303237" stroke-width="1.3"/><line x1="1635.2" y1="1695.8" x2="1635.2" y2="1881.0" stroke="#303237" stroke-width="1.3"/><line x1="1830.6" y1="1695.8" x2="1830.6" y2="1881.0" stroke="#303237" stroke-width="1.3"/><line x1="2026.0" y1="1695.8" x2="2026.0" y2="1881.0" stroke="#303237" stroke-width="1.3"/><line x1="2221.3" y1="1695.8" x2="2221.3" y2="1881.0" stroke="#303237" stroke-width="1.3"/><line x1="2416.6" y1="1695.8" x2="2416.6" y2="1881.0" stroke="#303237" stroke-width="1.3"/><line x1="2612.0" y1="1695.8" x2="2612.0" y2="1881.0" stroke="#303237" stroke-width="1.3"/><line x1="2807.3" y1="1695.8" x2="2807.3" y2="1881.0" stroke="#303237" stroke-width="1.3"/></svg>
<div class="t" style="left:624.30px;top:1889.33px;font-size:24.42px;color:#ccccdc;letter-spacing:1.825px;-webkit-text-stroke:0.39px #ccccdc;">08:00</div>
<div class="t" style="left:819.65px;top:1889.33px;font-size:24.42px;color:#ccccdc;letter-spacing:1.825px;-webkit-text-stroke:0.39px #ccccdc;">08:30</div>
<div class="t" style="left:1015.00px;top:1889.33px;font-size:24.42px;color:#ccccdc;letter-spacing:1.825px;-webkit-text-stroke:0.39px #ccccdc;">09:00</div>
<div class="t" style="left:1210.35px;top:1889.33px;font-size:24.42px;color:#ccccdc;letter-spacing:1.825px;-webkit-text-stroke:0.39px #ccccdc;">09:30</div>
<div class="t" style="left:1407.29px;top:1889.33px;font-size:24.42px;color:#ccccdc;letter-spacing:0.802px;-webkit-text-stroke:0.39px #ccccdc;">10:00</div>
<div class="t" style="left:1602.64px;top:1889.33px;font-size:24.42px;color:#ccccdc;letter-spacing:0.802px;-webkit-text-stroke:0.39px #ccccdc;">10:30</div>
<div class="t" style="left:1800.49px;top:1889.33px;font-size:24.42px;color:#ccccdc;letter-spacing:-0.448px;-webkit-text-stroke:0.39px #ccccdc;">11:00</div>
<div class="t" style="left:1995.84px;top:1889.33px;font-size:24.42px;color:#ccccdc;letter-spacing:-0.448px;-webkit-text-stroke:0.39px #ccccdc;">11:30</div>
<div class="t" style="left:2188.69px;top:1889.33px;font-size:24.42px;color:#ccccdc;letter-spacing:0.802px;-webkit-text-stroke:0.39px #ccccdc;">12:00</div>
<div class="t" style="left:2384.04px;top:1889.33px;font-size:24.42px;color:#ccccdc;letter-spacing:0.802px;-webkit-text-stroke:0.39px #ccccdc;">12:30</div>
<div class="t" style="left:2579.39px;top:1889.33px;font-size:24.42px;color:#ccccdc;letter-spacing:0.802px;-webkit-text-stroke:0.39px #ccccdc;">13:00</div>
<div class="t" style="left:2774.74px;top:1889.33px;font-size:24.42px;color:#ccccdc;letter-spacing:0.802px;-webkit-text-stroke:0.39px #ccccdc;">13:30</div>
<div class="t" style="left:506.13px;top:1694.08px;font-size:24.71px;color:#ccccdc;letter-spacing:1.149px;-webkit-text-stroke:0.40px #ccccdc;">4 s</div>
<div class="t" style="left:506.56px;top:1736.08px;font-size:24.71px;color:#ccccdc;letter-spacing:0.936px;-webkit-text-stroke:0.40px #ccccdc;">3 s</div>
<div class="t" style="left:506.26px;top:1776.88px;font-size:24.71px;color:#ccccdc;letter-spacing:1.087px;-webkit-text-stroke:0.40px #ccccdc;">2 s</div>
<div class="t" style="left:510.82px;top:1818.58px;font-size:24.71px;color:#ccccdc;letter-spacing:-1.193px;-webkit-text-stroke:0.40px #ccccdc;">1 s</div>
<div class="t" style="left:506.53px;top:1859.58px;font-size:24.71px;color:#ccccdc;letter-spacing:0.948px;-webkit-text-stroke:0.40px #ccccdc;">0 s</div>
<div class="b" style="left:506.5px;top:1948.0px;width:27.8px;height:8.0px;background:#73bf69;border-radius:4.0px;"></div>
<div class="t" style="left:548.33px;top:1938.12px;font-size:27.62px;color:#ccccdc;letter-spacing:-0.566px;-webkit-text-stroke:0.44px #ccccdc;">NorthCalifornia</div>
<div class="b" style="left:746.0px;top:1948.0px;width:28.0px;height:8.0px;background:#f2cc0c;border-radius:4.0px;"></div>
<div class="t" style="left:788.73px;top:1938.12px;font-size:27.62px;color:#ccccdc;letter-spacing:-0.747px;-webkit-text-stroke:0.44px #ccccdc;">NorthVirginia</div>
<div class="b" style="left:961.0px;top:1948.0px;width:28.0px;height:8.0px;background:#8ab8ff;border-radius:4.0px;"></div>
<div class="t" style="left:1003.69px;top:1938.12px;font-size:27.62px;color:#ccccdc;letter-spacing:-0.842px;-webkit-text-stroke:0.44px #ccccdc;">Oregon</div>
<div class="b" style="left:1111.0px;top:1948.0px;width:28.0px;height:8.0px;background:#ff780a;border-radius:4.0px;"></div>
<div class="t" style="left:1153.75px;top:1938.12px;font-size:27.62px;color:#ccccdc;letter-spacing:-1.479px;-webkit-text-stroke:0.44px #ccccdc;">SaoPaulo</div>
<div class="b" style="left:1283.0px;top:1948.0px;width:28.0px;height:8.0px;background:#f2495c;border-radius:4.0px;"></div>
<div class="t" style="left:1326.75px;top:1938.12px;font-size:27.62px;color:#ccccdc;letter-spacing:-1.133px;-webkit-text-stroke:0.44px #ccccdc;">Seoul</div>
<div class="t" style="left:81.50px;top:2030.86px;font-size:30.52px;color:#ccccdc;letter-spacing:-0.365px;-webkit-text-stroke:1.10px #ccccdc;">Data sent</div>
<svg class="s" style="left:0;top:0" width="2998" height="2415"><line x1="162.0" y1="2155.7" x2="1454.5" y2="2155.7" stroke="#2b2e33" stroke-width="1.3"/><line x1="162.0" y1="2200.5" x2="1454.5" y2="2200.5" stroke="#2b2e33" stroke-width="1.3"/><line x1="162.0" y1="2245.0" x2="1454.5" y2="2245.0" stroke="#2b2e33" stroke-width="1.3"/><line x1="162.0" y1="2289.8" x2="1454.5" y2="2289.8" stroke="#2b2e33" stroke-width="1.3"/><line x1="220.0" y1="2111.6" x2="220.0" y2="2297.7" stroke="#303237" stroke-width="1.3"/><line x1="327.8" y1="2111.6" x2="327.8" y2="2297.7" stroke="#303237" stroke-width="1.3"/><line x1="435.6" y1="2111.6" x2="435.6" y2="2297.7" stroke="#303237" stroke-width="1.3"/><line x1="543.4" y1="2111.6" x2="543.4" y2="2297.7" stroke="#303237" stroke-width="1.3"/><line x1="651.2" y1="2111.6" x2="651.2" y2="2297.7" stroke="#303237" stroke-width="1.3"/><line x1="759.0" y1="2111.6" x2="759.0" y2="2297.7" stroke="#303237" stroke-width="1.3"/><line x1="866.8" y1="2111.6" x2="866.8" y2="2297.7" stroke="#303237" stroke-width="1.3"/><line x1="974.6" y1="2111.6" x2="974.6" y2="2297.7" stroke="#303237" stroke-width="1.3"/><line x1="1082.4" y1="2111.6" x2="1082.4" y2="2297.7" stroke="#303237" stroke-width="1.3"/><line x1="1190.2" y1="2111.6" x2="1190.2" y2="2297.7" stroke="#303237" stroke-width="1.3"/><line x1="1298.0" y1="2111.6" x2="1298.0" y2="2297.7" stroke="#303237" stroke-width="1.3"/><line x1="1405.8" y1="2111.6" x2="1405.8" y2="2297.7" stroke="#303237" stroke-width="1.3"/></svg>
<div class="t" style="left:185.80px;top:2305.53px;font-size:24.42px;color:#ccccdc;letter-spacing:1.825px;-webkit-text-stroke:0.39px #ccccdc;">08:00</div>
<div class="t" style="left:293.60px;top:2305.53px;font-size:24.42px;color:#ccccdc;letter-spacing:1.825px;-webkit-text-stroke:0.39px #ccccdc;">08:30</div>
<div class="t" style="left:401.40px;top:2305.53px;font-size:24.42px;color:#ccccdc;letter-spacing:1.825px;-webkit-text-stroke:0.39px #ccccdc;">09:00</div>
<div class="t" style="left:509.20px;top:2305.53px;font-size:24.42px;color:#ccccdc;letter-spacing:1.825px;-webkit-text-stroke:0.39px #ccccdc;">09:30</div>
<div class="t" style="left:618.59px;top:2305.53px;font-size:24.42px;color:#ccccdc;letter-spacing:0.802px;-webkit-text-stroke:0.39px #ccccdc;">10:00</div>
<div class="t" style="left:726.39px;top:2305.53px;font-size:24.42px;color:#ccccdc;letter-spacing:0.802px;-webkit-text-stroke:0.39px #ccccdc;">10:30</div>
<div class="t" style="left:836.69px;top:2305.53px;font-size:24.42px;color:#ccccdc;letter-spacing:-0.448px;-webkit-text-stroke:0.39px #ccccdc;">11:00</div>
<div class="t" style="left:944.49px;top:2305.53px;font-size:24.42px;color:#ccccdc;letter-spacing:-0.448px;-webkit-text-stroke:0.39px #ccccdc;">11:30</div>
<div class="t" style="left:1049.79px;top:2305.53px;font-size:24.42px;color:#ccccdc;letter-spacing:0.802px;-webkit-text-stroke:0.39px #ccccdc;">12:00</div>
<div class="t" style="left:1157.59px;top:2305.53px;font-size:24.42px;color:#ccccdc;letter-spacing:0.802px;-webkit-text-stroke:0.39px #ccccdc;">12:30</div>
<div class="t" style="left:1265.39px;top:2305.53px;font-size:24.42px;color:#ccccdc;letter-spacing:0.802px;-webkit-text-stroke:0.39px #ccccdc;">13:00</div>
<div class="t" style="left:1373.19px;top:2305.53px;font-size:24.42px;color:#ccccdc;letter-spacing:0.802px;-webkit-text-stroke:0.39px #ccccdc;">13:30</div>
<div class="t" style="left:88.32px;top:2142.08px;font-size:24.71px;color:#ccccdc;letter-spacing:0.075px;-webkit-text-stroke:0.40px #ccccdc;">15 kB</div>
<div class="t" style="left:88.32px;top:2187.38px;font-size:24.71px;color:#ccccdc;letter-spacing:0.075px;-webkit-text-stroke:0.40px #ccccdc;">10 kB</div>
<div class="t" style="left:100.81px;top:2230.98px;font-size:24.71px;color:#ccccdc;letter-spacing:0.517px;-webkit-text-stroke:0.40px #ccccdc;">5 kB</div>
<div class="t" style="left:113.53px;top:2275.98px;font-size:24.71px;color:#ccccdc;letter-spacing:0.590px;-webkit-text-stroke:0.40px #ccccdc;">0 B</div>
<div class="b" style="left:90.5px;top:2364.0px;width:27.8px;height:8.0px;background:#73bf69;border-radius:4.0px;"></div>
<div class="t" style="left:132.33px;top:2354.12px;font-size:27.62px;color:#ccccdc;letter-spacing:-0.566px;-webkit-text-stroke:0.44px #ccccdc;">NorthCalifornia</div>
<div class="b" style="left:330.0px;top:2364.0px;width:28.0px;height:8.0px;background:#f2cc0c;border-radius:4.0px;"></div>
<div class="t" style="left:372.73px;top:2354.12px;font-size:27.62px;color:#ccccdc;letter-spacing:-0.747px;-webkit-text-stroke:0.44px #ccccdc;">NorthVirginia</div>
<div class="b" style="left:545.0px;top:2364.0px;width:28.0px;height:8.0px;background:#8ab8ff;border-radius:4.0px;"></div>
<div class="t" style="left:587.69px;top:2354.12px;font-size:27.62px;color:#ccccdc;letter-spacing:-0.842px;-webkit-text-stroke:0.44px #ccccdc;">Oregon</div>
<div class="b" style="left:695.0px;top:2364.0px;width:28.0px;height:8.0px;background:#ff780a;border-radius:4.0px;"></div>
<div class="t" style="left:737.75px;top:2354.12px;font-size:27.62px;color:#ccccdc;letter-spacing:-1.479px;-webkit-text-stroke:0.44px #ccccdc;">SaoPaulo</div>
<div class="b" style="left:867.0px;top:2364.0px;width:28.0px;height:8.0px;background:#f2495c;border-radius:4.0px;"></div>
<div class="t" style="left:910.75px;top:2354.12px;font-size:27.62px;color:#ccccdc;letter-spacing:-1.133px;-webkit-text-stroke:0.44px #ccccdc;">Seoul</div>
<div class="t" style="left:1521.50px;top:2030.86px;font-size:30.52px;color:#ccccdc;letter-spacing:0.179px;-webkit-text-stroke:1.10px #ccccdc;">Data received</div>
<svg class="s" style="left:0;top:0" width="2998" height="2415"><line x1="1630.8" y1="2112.0" x2="2896.0" y2="2112.0" stroke="#2b2e33" stroke-width="1.3"/><line x1="1630.8" y1="2163.5" x2="2896.0" y2="2163.5" stroke="#2b2e33" stroke-width="1.3"/><line x1="1630.8" y1="2217.0" x2="2896.0" y2="2217.0" stroke="#2b2e33" stroke-width="1.3"/><line x1="1630.8" y1="2268.3" x2="2896.0" y2="2268.3" stroke="#2b2e33" stroke-width="1.3"/><line x1="1688.5" y1="2112.0" x2="1688.5" y2="2297.0" stroke="#303237" stroke-width="1.3"/><line x1="1793.8" y1="2112.0" x2="1793.8" y2="2297.0" stroke="#303237" stroke-width="1.3"/><line x1="1899.2" y1="2112.0" x2="1899.2" y2="2297.0" stroke="#303237" stroke-width="1.3"/><line x1="2004.5" y1="2112.0" x2="2004.5" y2="2297.0" stroke="#303237" stroke-width="1.3"/><line x1="2109.9" y1="2112.0" x2="2109.9" y2="2297.0" stroke="#303237" stroke-width="1.3"/><line x1="2215.2" y1="2112.0" x2="2215.2" y2="2297.0" stroke="#303237" stroke-width="1.3"/><line x1="2320.6" y1="2112.0" x2="2320.6" y2="2297.0" stroke="#303237" stroke-width="1.3"/><line x1="2425.9" y1="2112.0" x2="2425.9" y2="2297.0" stroke="#303237" stroke-width="1.3"/><line x1="2531.3" y1="2112.0" x2="2531.3" y2="2297.0" stroke="#303237" stroke-width="1.3"/><line x1="2636.7" y1="2112.0" x2="2636.7" y2="2297.0" stroke="#303237" stroke-width="1.3"/><line x1="2742.0" y1="2112.0" x2="2742.0" y2="2297.0" stroke="#303237" stroke-width="1.3"/><line x1="2847.3" y1="2112.0" x2="2847.3" y2="2297.0" stroke="#303237" stroke-width="1.3"/></svg>
<div class="t" style="left:1654.30px;top:2305.53px;font-size:24.42px;color:#ccccdc;letter-spacing:1.825px;-webkit-text-stroke:0.39px #ccccdc;">08:00</div>
<div class="t" style="left:1759.65px;top:2305.53px;font-size:24.42px;color:#ccccdc;letter-spacing:1.825px;-webkit-text-stroke:0.39px #ccccdc;">08:30</div>
<div class="t" style="left:1865.00px;top:2305.53px;font-size:24.42px;color:#ccccdc;letter-spacing:1.825px;-webkit-text-stroke:0.39px #ccccdc;">09:00</div>
<div class="t" style="left:1970.35px;top:2305.53px;font-size:24.42px;color:#ccccdc;letter-spacing:1.825px;-webkit-text-stroke:0.39px #ccccdc;">09:30</div>
<div class="t" style="left:2077.29px;top:2305.53px;font-size:24.42px;color:#ccccdc;letter-spacing:0.802px;-webkit-text-stroke:0.39px #ccccdc;">10:00</div>
<div class="t" style="left:2182.64px;top:2305.53px;font-size:24.42px;color:#ccccdc;letter-spacing:0.802px;-webkit-text-stroke:0.39px #ccccdc;">10:30</div>
<div class="t" style="left:2290.49px;top:2305.53px;font-size:24.42px;color:#ccccdc;letter-spacing:-0.448px;-webkit-text-stroke:0.39px #ccccdc;">11:00</div>
<div class="t" style="left:2395.84px;top:2305.53px;font-size:24.42px;color:#ccccdc;letter-spacing:-0.448px;-webkit-text-stroke:0.39px #ccccdc;">11:30</div>
<div class="t" style="left:2498.69px;top:2305.53px;font-size:24.42px;color:#ccccdc;letter-spacing:0.802px;-webkit-text-stroke:0.39px #ccccdc;">12:00</div>
<div class="t" style="left:2604.04px;top:2305.53px;font-size:24.42px;color:#ccccdc;letter-spacing:0.802px;-webkit-text-stroke:0.39px #ccccdc;">12:30</div>
<div class="t" style="left:2709.39px;top:2305.53px;font-size:24.42px;color:#ccccdc;letter-spacing:0.802px;-webkit-text-stroke:0.39px #ccccdc;">13:00</div>
<div class="t" style="left:2814.74px;top:2305.53px;font-size:24.42px;color:#ccccdc;letter-spacing:0.802px;-webkit-text-stroke:0.39px #ccccdc;">13:30</div>
<div class="t" style="left:1532.33px;top:2098.08px;font-size:24.71px;color:#ccccdc;letter-spacing:0.813px;-webkit-text-stroke:0.40px #ccccdc;">42.6 kB</div>
<div class="t" style="left:1532.33px;top:2149.78px;font-size:24.71px;color:#ccccdc;letter-spacing:0.813px;-webkit-text-stroke:0.40px #ccccdc;">42.5 kB</div>
<div class="t" style="left:1532.33px;top:2202.58px;font-size:24.71px;color:#ccccdc;letter-spacing:0.813px;-webkit-text-stroke:0.40px #ccccdc;">42.5 kB</div>
<div class="t" style="left:1530.93px;top:2254.58px;font-size:24.71px;color:#ccccdc;letter-spacing:1.046px;-webkit-text-stroke:0.40px #ccccdc;">42.4 kB</div>
<div class="b" style="left:1531.5px;top:2364.0px;width:27.8px;height:8.0px;background:#73bf69;border-radius:4.0px;"></div>
<div class="t" style="left:1573.33px;top:2354.12px;font-size:27.62px;color:#ccccdc;letter-spacing:-0.566px;-webkit-text-stroke:0.44px #ccccdc;">NorthCalifornia</div>
<div class="b" style="left:1771.0px;top:2364.0px;width:28.0px;height:8.0px;background:#f2cc0c;border-radius:4.0px;"></div>
<div class="t" style="left:1813.73px;top:2354.12px;font-size:27.62px;color:#ccccdc;letter-spacing:-0.747px;-webkit-text-stroke:0.44px #ccccdc;">NorthVirginia</div>
<div class="b" style="left:1986.0px;top:2364.0px;width:28.0px;height:8.0px;background:#8ab8ff;border-radius:4.0px;"></div>
<div class="t" style="left:2028.69px;top:2354.12px;font-size:27.62px;color:#ccccdc;letter-spacing:-0.842px;-webkit-text-stroke:0.44px #ccccdc;">Oregon</div>
<div class="b" style="left:2136.0px;top:2364.0px;width:28.0px;height:8.0px;background:#ff780a;border-radius:4.0px;"></div>
<div class="t" style="left:2178.75px;top:2354.12px;font-size:27.62px;color:#ccccdc;letter-spacing:-1.479px;-webkit-text-stroke:0.44px #ccccdc;">SaoPaulo</div>
<div class="b" style="left:2308.0px;top:2364.0px;width:28.0px;height:8.0px;background:#f2495c;border-radius:4.0px;"></div>
<div class="t" style="left:2351.75px;top:2354.12px;font-size:27.62px;color:#ccccdc;letter-spacing:-1.133px;-webkit-text-stroke:0.44px #ccccdc;">Seoul</div>
<svg class="s" style="left:0;top:0" width="2998" height="2415"><polyline fill="none" stroke="#73bf69" stroke-width="2.2" stroke-linejoin="round" points="551.6,1864.5 558.1,1864.5 564.6,1864.5 571.1,1864.5 577.6,1864.5 584.2,1864.5 590.7,1864.5 597.2,1864.5 603.7,1864.5 610.2,1864.5 616.7,1864.5 623.2,1864.5 629.7,1864.5 636.3,1861.0 642.8,1861.0 649.3,1861.0 655.8,1861.0 662.3,1861.0 668.8,1861.0 675.3,1862.5 681.8,1862.5 688.4,1862.5 694.9,1862.5 701.4,1862.5 707.9,1862.5 714.4,1862.5 720.9,1862.5 727.4,1862.5 733.9,1862.5 740.4,1862.5 747.0,1862.5 753.5,1862.5 760.0,1862.5 766.5,1862.5 773.0,1862.5 779.5,1862.5 786.0,1862.5 792.5,1862.5 799.1,1862.5 805.6,1862.5 812.1,1862.5 818.6,1862.5 825.1,1862.5 831.6,1862.5 838.1,1862.5 844.6,1862.5 851.2,1861.0 857.7,1861.0 864.2,1861.0 870.7,1861.0 877.2,1861.0 883.7,1861.0 890.2,1861.0 896.7,1861.0 903.2,1861.0 909.8,1862.5 916.3,1862.5 922.8,1862.5 929.3,1862.5 935.8,1862.5 942.3,1862.5 948.8,1862.5 955.3,1862.5 961.9,1861.0 968.4,1861.0 974.9,1861.0 981.4,1861.0 987.9,1861.0 994.4,1861.0 1000.9,1861.0 1007.4,1864.5 1014.0,1864.5 1020.5,1864.5 1027.0,1864.5 1033.5,1864.5 1040.0,1864.5 1046.5,1864.5 1053.0,1864.5 1059.5,1864.5 1066.0,1864.5 1072.6,1864.5 1079.1,1861.0 1085.6,1861.0 1092.1,1861.0 1098.6,1861.0 1105.1,1861.0 1111.6,1861.0 1118.1,1861.0 1124.7,1861.0 1131.2,1861.0 1137.7,1861.0 1144.2,1861.0 1150.7,1861.0 1157.2,1862.5 1163.7,1862.5 1170.2,1862.5 1176.8,1862.5 1183.3,1862.5 1189.8,1862.5 1196.3,1862.5 1202.8,1862.5 1209.3,1862.5 1215.8,1862.5 1222.3,1861.0 1228.8,1861.0 1235.4,1861.0 1241.9,1861.0 1248.4,1861.0 1254.9,1861.0 1261.4,1864.5 1267.9,1864.5 1274.4,1864.5 1280.9,1864.5 1287.5,1864.5 1294.0,1864.5 1300.5,1864.5 1307.0,1864.5 1313.5,1864.5 1320.0,1864.5 1326.5,1864.5 1333.0,1864.5 1339.6,1864.5 1346.1,1864.5 1352.6,1864.5 1359.1,1864.5 1365.6,1864.5 1372.1,1864.5 1378.6,1864.5 1385.1,1864.5 1391.6,1864.5 1398.2,1864.5 1404.7,1864.5 1411.2,1864.5 1417.7,1864.5 1424.2,1864.5 1430.7,1862.5 1437.2,1862.5 1443.7,1862.5 1450.3,1862.5 1456.8,1861.0 1463.3,1861.0 1469.8,1861.0 1476.3,1861.0 1482.8,1861.0 1489.3,1864.5 1495.8,1864.5 1502.4,1864.5 1508.9,1864.5 1515.4,1864.5 1521.9,1864.5 1528.4,1864.5 1534.9,1864.5 1541.4,1864.5 1547.9,1864.5 1554.4,1864.5 1561.0,1864.5 1567.5,1864.5 1574.0,1864.5 1580.5,1864.5 1587.0,1864.5 1593.5,1864.5 1600.0,1864.5 1606.5,1864.5 1613.1,1864.5 1619.6,1864.5 1626.1,1864.5 1632.6,1864.5 1639.1,1864.5 1645.6,1864.5 1652.1,1864.5 1658.6,1864.5 1665.2,1864.5 1671.7,1864.5 1678.2,1862.5 1684.7,1862.5 1691.2,1862.5 1697.7,1862.5 1704.2,1862.5 1710.7,1862.5 1717.2,1862.5 1723.8,1862.5 1730.3,1862.5 1736.8,1862.5 1743.3,1862.5 1749.8,1862.5 1756.3,1862.5 1762.8,1861.0 1769.3,1861.0 1775.9,1861.0 1782.4,1861.0 1788.9,1861.0 1795.4,1861.0 1801.9,1861.0 1808.4,1861.0 1814.9,1861.0 1821.4,1861.0 1828.0,1861.0 1834.5,1861.0 1841.0,1861.0 1847.5,1861.0 1854.0,1861.0 1860.5,1861.0 1867.0,1861.0 1873.5,1861.0 1880.0,1861.0 1886.6,1861.0 1893.1,1862.5 1899.6,1862.5 1906.1,1862.5 1912.6,1862.5 1919.1,1862.5 1925.6,1862.5 1932.1,1862.5 1938.7,1862.5 1945.2,1862.5 1951.7,1862.5 1958.2,1862.5 1964.7,1862.5 1971.2,1862.5 1977.7,1862.5 1984.2,1862.5 1990.8,1862.5 1997.3,1862.5 2003.8,1862.5 2010.3,1862.5 2016.8,1862.5 2023.3,1862.5 2029.8,1862.5 2036.3,1862.5 2042.8,1862.5 2049.4,1864.5 2055.9,1864.5 2062.4,1864.5 2068.9,1864.5 2075.4,1864.5 2081.9,1864.5 2088.4,1862.5 2094.9,1862.5 2101.5,1862.5 2108.0,1862.5 2114.5,1862.5 2121.0,1862.5 2127.5,1862.5 2134.0,1862.5 2140.5,1862.5 2147.0,1862.5 2153.6,1734.2 2160.1,1734.2 2166.6,1734.2 2173.1,1734.2 2179.6,1734.2 2186.1,1862.5 2192.6,1862.5 2199.1,1862.5 2205.6,1862.5 2212.2,1862.5 2218.7,1862.5 2225.2,1862.5 2231.7,1862.5 2238.2,1862.5 2244.7,1862.5 2251.2,1862.5 2257.7,1862.5 2264.3,1862.5 2270.8,1862.5 2277.3,1862.5 2283.8,1862.5 2290.3,1862.5 2296.8,1862.5 2303.3,1862.5 2309.8,1862.5 2316.4,1862.5 2322.9,1862.5 2329.4,1862.5 2335.9,1862.5 2342.4,1862.5 2348.9,1862.5 2355.4,1862.5 2361.9,1862.5 2368.4,1862.5 2375.0,1862.5 2381.5,1861.0 2388.0,1861.0 2394.5,1861.0 2401.0,1861.0 2407.5,1861.0 2414.0,1861.0 2420.5,1861.0 2427.1,1861.0 2433.6,1861.0 2440.1,1861.0 2446.6,1861.0 2453.1,1861.0 2459.6,1861.0 2466.1,1861.0 2472.6,1861.0 2479.2,1861.0 2485.7,1861.0 2492.2,1861.0 2498.7,1861.0 2505.2,1861.0 2511.7,1861.0 2518.2,1861.0 2524.7,1861.0 2531.2,1861.0 2537.8,1861.0 2544.3,1861.0 2550.8,1861.0 2557.3,1861.0 2563.8,1861.0 2570.3,1861.0 2576.8,1861.0 2583.3,1861.0 2589.9,1862.5 2596.4,1862.5 2602.9,1862.5 2609.4,1862.5 2615.9,1862.5 2622.4,1862.5 2628.9,1862.5 2635.4,1862.5 2642.0,1862.5 2648.5,1862.5 2655.0,1862.5 2661.5,1862.5 2668.0,1862.5 2674.5,1864.5 2681.0,1864.5 2687.5,1864.5 2694.0,1864.5 2700.6,1864.5 2707.1,1864.5 2713.6,1864.5 2720.1,1864.5 2726.6,1864.5 2733.1,1861.0 2739.6,1861.0 2746.1,1861.0 2752.7,1861.0 2759.2,1862.5 2765.7,1862.5 2772.2,1862.5 2778.7,1862.5 2785.2,1862.5 2791.7,1862.5 2798.2,1862.5 2804.8,1862.5 2811.3,1862.5 2817.8,1862.5 2824.3,1862.5 2830.8,1862.5 2837.3,1862.5 2843.8,1861.0 2850.3,1861.0 2856.8,1861.0 2863.4,1861.0 2869.9,1861.0 2876.4,1861.0 2882.9,1861.0 2889.4,1861.0"/><polyline fill="none" stroke="#f2cc0c" stroke-width="2.2" stroke-linejoin="round" points="551.6,1872.5 2175.0,1872.5 2181.4,1830.0 2207.4,1830.0 2213.7,1872.5 2890.6,1872.5"/><polyline fill="none" stroke="#8ab8ff" stroke-width="2.2" stroke-linejoin="round" points="551.6,1861.7 558.1,1861.7 564.6,1861.7 571.1,1861.7 577.6,1819.0 584.2,1819.0 590.7,1819.0 597.2,1819.0 603.7,1819.0 610.2,1864.6 616.7,1864.6 623.2,1864.6 629.7,1864.6 636.3,1864.6 642.8,1864.6 649.3,1864.6 655.8,1864.6 662.3,1864.6 668.8,1864.6 675.3,1864.6 681.8,1864.6 688.4,1864.6 694.9,1864.6 701.4,1864.6 707.9,1864.6 714.4,1864.6 720.9,1864.6 727.4,1864.6 733.9,1864.6 740.4,1864.6 747.0,1864.6 753.5,1864.6 760.0,1864.6 766.5,1864.6 773.0,1864.6 779.5,1864.6 786.0,1864.6 792.5,1864.6 799.1,1864.6 805.6,1864.6 812.1,1864.6 818.6,1864.6 825.1,1864.6 831.6,1864.6 838.1,1864.6 844.6,1864.6 851.2,1864.6 857.7,1864.6 864.2,1864.6 870.7,1861.7 877.2,1861.7 883.7,1861.7 890.2,1861.7 896.7,1861.7 903.2,1861.7 909.8,1861.7 916.3,1861.7 922.8,1861.7 929.3,1861.7 935.8,1861.7 942.3,1861.7 948.8,1861.7 955.3,1861.7 961.9,1861.7 968.4,1861.7 974.9,1861.7 981.4,1861.7 987.9,1861.7 994.4,1864.6 1000.9,1864.6 1007.4,1864.6 1014.0,1864.6 1020.5,1864.6 1027.0,1864.6 1033.5,1864.6 1040.0,1864.6 1046.5,1864.6 1053.0,1864.6 1059.5,1864.6 1066.0,1864.6 1072.6,1864.6 1079.1,1864.6 1085.6,1864.6 1092.1,1864.6 1098.6,1864.6 1105.1,1864.6 1111.6,1864.6 1118.1,1864.6 1124.7,1864.6 1131.2,1864.6 1137.7,1864.6 1144.2,1864.6 1150.7,1864.6 1157.2,1864.6 1163.7,1864.6 1170.2,1861.7 1176.8,1861.7 1183.3,1861.7 1189.8,1861.7 1196.3,1861.7 1202.8,1861.7 1209.3,1861.7 1215.8,1861.7 1222.3,1861.7 1228.8,1861.7 1235.4,1861.7 1241.9,1861.7 1248.4,1864.6 1254.9,1864.6 1261.4,1864.6 1267.9,1864.6 1274.4,1864.6 1280.9,1864.6 1287.5,1861.7 1294.0,1861.7 1300.5,1861.7 1307.0,1861.7 1313.5,1861.7 1320.0,1861.7 1326.5,1864.6 1333.0,1864.6 1339.6,1864.6 1346.1,1864.6 1352.6,1864.6 1359.1,1864.6 1365.6,1864.6 1372.1,1864.6 1378.6,1864.6 1385.1,1864.6 1391.6,1864.6 1398.2,1864.6 1404.7,1864.6 1411.2,1864.6 1417.7,1864.6 1424.2,1864.6 1430.7,1864.6 1437.2,1864.6 1443.7,1864.6 1450.3,1864.6 1456.8,1864.6 1463.3,1864.6 1469.8,1864.6 1476.3,1864.6 1482.8,1864.6 1489.3,1861.7 1495.8,1861.7 1502.4,1861.7 1508.9,1861.7 1515.4,1861.7 1521.9,1861.7 1528.4,1861.7 1534.9,1864.6 1541.4,1864.6 1547.9,1864.6 1554.4,1864.6 1561.0,1864.6 1567.5,1864.6 1574.0,1864.6 1580.5,1864.6 1587.0,1864.6 1593.5,1864.6 1600.0,1864.6 1606.5,1864.6 1613.1,1864.6 1619.6,1864.6 1626.1,1864.6 1632.6,1864.6 1639.1,1861.7 1645.6,1861.7 1652.1,1861.7 1658.6,1861.7 1665.2,1861.7 1671.7,1861.7 1678.2,1861.7 1684.7,1861.7 1691.2,1861.7 1697.7,1861.7 1704.2,1861.7 1710.7,1861.7 1717.2,1861.7 1723.8,1861.7 1730.3,1864.6 1736.8,1864.6 1743.3,1864.6 1749.8,1864.6 1756.3,1864.6 1762.8,1864.6 1769.3,1861.7 1775.9,1861.7 1782.4,1861.7 1788.9,1861.7 1795.4,1861.7 1801.9,1861.7 1808.4,1861.7 1814.9,1861.7 1821.4,1861.7 1828.0,1861.7 1834.5,1861.7 1841.0,1861.7 1847.5,1861.7 1854.0,1864.6 1860.5,1864.6 1867.0,1864.6 1873.5,1864.6 1880.0,1864.6 1886.6,1864.6 1893.1,1864.6 1899.6,1864.6 1906.1,1864.6 1912.6,1864.6 1919.1,1864.6 1925.6,1864.6 1932.1,1864.6 1938.7,1861.7 1945.2,1861.7 1951.7,1861.7 1958.2,1861.7 1964.7,1861.7 1971.2,1861.7 1977.7,1861.7 1984.2,1861.7 1990.8,1861.7 1997.3,1861.7 2003.8,1861.7 2010.3,1861.7 2016.8,1861.7 2023.3,1861.7 2029.8,1861.7 2036.3,1861.7 2042.8,1861.7 2049.4,1861.7 2055.9,1861.7 2062.4,1861.7 2068.9,1861.7 2075.4,1861.7 2081.9,1861.7 2088.4,1861.7 2094.9,1861.7 2101.5,1861.7 2108.0,1861.7 2114.5,1861.7 2121.0,1861.7 2127.5,1861.7 2134.0,1861.7 2140.5,1861.7 2147.0,1861.7 2153.6,1861.7 2160.1,1861.7 2166.6,1861.7 2173.1,1861.7 2179.6,1861.7 2186.1,1861.7 2192.6,1861.7 2199.1,1861.7 2205.6,1818.8 2212.2,1818.8 2218.7,1818.8 2225.2,1818.8 2231.7,1818.8 2238.2,1822.0 2244.7,1822.0 2251.2,1822.0 2257.7,1822.0 2264.3,1822.0 2270.8,1861.7 2277.3,1861.7 2283.8,1861.7 2290.3,1861.7 2296.8,1861.7 2303.3,1861.7 2309.8,1861.7 2316.4,1861.7 2322.9,1861.7 2329.4,1864.6 2335.9,1864.6 2342.4,1864.6 2348.9,1864.6 2355.4,1864.6 2361.9,1864.6 2368.4,1864.6 2375.0,1864.6 2381.5,1864.6 2388.0,1864.6 2394.5,1864.6 2401.0,1864.6 2407.5,1861.7 2414.0,1861.7 2420.5,1861.7 2427.1,1861.7 2433.6,1861.7 2440.1,1861.7 2446.6,1861.7 2453.1,1861.7 2459.6,1861.7 2466.1,1861.7 2472.6,1861.7 2479.2,1861.7 2485.7,1861.7 2492.2,1861.7 2498.7,1861.7 2505.2,1861.7 2511.7,1861.7 2518.2,1861.7 2524.7,1861.7 2531.2,1861.7 2537.8,1861.7 2544.3,1861.7 2550.8,1864.6 2557.3,1864.6 2563.8,1864.6 2570.3,1864.6 2576.8,1864.6 2583.3,1864.6 2589.9,1864.6 2596.4,1864.6 2602.9,1864.6 2609.4,1864.6 2615.9,1864.6 2622.4,1864.6 2628.9,1864.6 2635.4,1864.6 2642.0,1864.6 2648.5,1864.6 2655.0,1864.6 2661.5,1864.6 2668.0,1864.6 2674.5,1864.6 2681.0,1864.6 2687.5,1864.6 2694.0,1864.6 2700.6,1864.6 2707.1,1864.6 2713.6,1864.6 2720.1,1864.6 2726.6,1864.6 2733.1,1864.6 2739.6,1864.6 2746.1,1864.6 2752.7,1864.6 2759.2,1864.6 2765.7,1861.7 2772.2,1861.7 2778.7,1861.7 2785.2,1861.7 2791.7,1861.7 2798.2,1861.7 2804.8,1861.7 2811.3,1861.7 2817.8,1861.7 2824.3,1861.7 2830.8,1861.7 2837.3,1861.7 2843.8,1861.7 2850.3,1861.7 2856.8,1861.7 2863.4,1861.7 2869.9,1861.7 2876.4,1861.7 2882.9,1861.7 2889.4,1861.7"/><polyline fill="none" stroke="#ff780a" stroke-width="2.2" stroke-linejoin="round" points="551.6,1858.3 573.4,1858.3 580.0,1853.8 638.0,1853.8 646.0,1858.3 670.0,1858.3 676.6,1853.8 702.6,1853.8 710.0,1858.3 768.0,1858.3 775.7,1853.8 801.7,1853.8 809.0,1858.3 898.0,1858.3 905.6,1853.8 931.6,1853.8 939.0,1858.3 963.0,1858.3 970.6,1853.8 996.6,1853.8 1004.0,1858.3 1029.0,1858.3 1036.7,1853.8 1158.0,1853.8 1165.5,1858.3 1258.0,1858.3 1265.7,1853.8 1291.7,1853.8 1299.0,1858.3 1322.0,1858.3 1329.0,1853.8 1355.0,1853.8 1361.0,1858.3 1419.5,1858.3 1426.0,1853.8 1452.0,1853.8 1459.0,1858.3 1485.0,1858.3 1491.0,1853.8 1582.0,1853.8 1589.0,1858.3 1615.0,1858.3 1622.0,1853.8 1679.0,1853.8 1687.0,1858.3 1745.0,1858.3 1751.0,1853.8 1842.7,1853.8 1849.0,1858.3 1874.6,1858.3 1881.0,1853.8 1972.6,1853.8 1979.0,1858.3 2044.0,1858.3 2050.5,1853.8 2070.0,1853.8 2077.0,1858.3 2201.0,1858.3 2207.8,1853.0 2233.8,1853.0 2239.7,1816.0 2266.0,1816.0 2272.7,1853.0 2331.0,1853.0 2337.7,1859.0 2365.5,1859.0 2369.0,1857.8 2428.6,1857.8 2434.7,1853.8 2461.0,1853.8 2468.0,1858.3 2494.0,1858.3 2501.0,1853.8 2527.6,1853.8 2533.0,1858.3 2591.5,1858.3 2598.4,1853.8 2688.6,1853.8 2695.5,1858.3 2722.0,1858.3 2728.8,1853.8 2787.0,1853.8 2794.0,1858.3 2851.0,1858.3 2857.8,1853.8 2890.6,1853.8"/><polyline fill="none" stroke="#f2495c" stroke-width="2.2" stroke-linejoin="round" points="551.6,1848.0 573.4,1848.0 580.0,1840.0 670.0,1840.0 677.0,1848.0 703.0,1848.0 710.0,1840.0 930.5,1840.0 938.0,1848.0 963.0,1848.0 970.0,1840.0 996.0,1840.0 1003.0,1848.0 1029.0,1848.0 1036.7,1839.0 1093.0,1839.0 1101.0,1848.0 1158.0,1848.0 1165.5,1840.0 1191.5,1840.0 1199.0,1848.0 1288.0,1848.0 1295.0,1840.0 1322.0,1840.0 1329.7,1848.0 1355.0,1848.0 1361.0,1840.0 1387.0,1840.0 1394.7,1848.0 1419.5,1848.0 1426.0,1840.0 1485.6,1840.0 1491.0,1848.0 1517.0,1848.0 1524.0,1840.0 1648.0,1840.0 1654.5,1848.0 1679.4,1848.0 1686.8,1840.0 1842.7,1840.0 1849.0,1848.0 1908.0,1848.0 1914.0,1840.0 1940.0,1840.0 1947.7,1848.0 1972.6,1848.0 1980.0,1840.0 2038.0,1840.0 2044.0,1848.0 2103.0,1848.0 2110.0,1840.0 2135.4,1840.0 2142.8,1848.0 2168.8,1848.0 2172.5,1846.5 2201.0,1846.5 2207.8,1840.0 2233.8,1840.0 2239.3,1714.0 2265.7,1714.0 2265.7,1724.0"/><polyline fill="none" stroke="#f2495c" stroke-width="2.2" stroke-linejoin="round" points="2663.0,1840.0 2688.6,1840.0 2695.5,1848.0 2753.8,1848.0 2760.7,1840.0 2787.0,1840.0 2794.0,1848.0 2819.0,1848.0 2826.0,1839.5 2852.0,1839.5 2859.0,1848.0 2884.0,1848.0 2890.6,1842.0"/><polyline fill="none" stroke="#f2495c" stroke-width="2.2" stroke-linejoin="round" points="2305.0,1848.0 2356.6,1848.0"/><polyline fill="none" stroke="#f2495c" stroke-width="2.0" stroke-linejoin="round" points="2280.0,1839.0 2280.0,1848.0 2286.0,1848.0"/><polyline fill="none" stroke="#f2495c" stroke-width="2.2" stroke-linejoin="round" points="162.0,2200.3 1451.0,2200.3"/><polyline fill="none" stroke="#ff780a" stroke-width="2.2" stroke-linejoin="round" points="1107.0,2200.3 1114.0,2200.3"/><polyline fill="none" stroke="#ff780a" stroke-width="2.2" stroke-linejoin="round" points="1117.0,2200.3 1128.0,2200.3"/><polyline fill="none" stroke="#ff780a" stroke-width="2.2" stroke-linejoin="round" points="1157.0,2200.3 1326.0,2200.3"/><polyline fill="none" stroke="#73bf69" stroke-width="2.0" stroke-linejoin="round" points="1630.8,2173.0 1636.8,2173.0 1642.8,2173.0 1648.8,2173.0 1654.8,2173.0 1660.8,2173.0 1666.8,2221.0 1672.8,2221.0 1678.8,2221.0 1684.8,2221.0 1690.8,2221.0 1696.8,2197.0 1702.8,2197.0 1708.8,2197.0 1714.8,2197.0 1720.8,2245.0 1726.8,2245.0 1732.8,2245.0 1738.8,2245.0 1744.8,2245.0 1750.8,2245.0 1756.8,2221.0 1762.8,2221.0 1768.8,2221.0 1774.8,2221.0 1780.8,2221.0 1786.8,2221.0 1792.8,2221.0 1798.8,2173.0 1804.8,2173.0 1810.8,2173.0 1816.8,2173.0 1822.8,2173.0 1828.8,2173.0 1834.8,2173.0 1840.8,2173.0 1846.8,2173.0 1852.8,2173.0 1858.8,2149.0 1864.8,2149.0 1870.8,2149.0 1876.8,2149.0 1882.8,2149.0 1888.8,2149.0 1894.8,2149.0 1900.8,2197.0 1906.8,2197.0 1912.8,2197.0 1918.8,2197.0 1924.8,2221.0 1930.8,2221.0 1936.8,2221.0 1942.8,2221.0 1948.8,2245.0 1954.8,2245.0 1960.8,2245.0 1966.8,2197.0 1972.8,2197.0 1978.8,2197.0 1984.8,2197.0 1990.8,2197.0 1996.8,2197.0 2002.8,2221.0 2008.8,2221.0 2014.8,2221.0 2020.8,2245.0 2026.8,2245.0 2032.8,2245.0 2038.8,2245.0 2044.8,2245.0 2050.8,2245.0 2056.8,2245.0 2062.8,2197.0 2068.8,2197.0 2074.8,2197.0 2080.8,2221.0 2086.8,2221.0 2092.8,2221.0 2098.8,2221.0 2104.8,2221.0 2110.8,2149.0 2116.8,2149.0 2122.8,2149.0 2128.8,2149.0 2134.8,2149.0 2140.8,2149.0 2146.8,2197.0 2152.8,2197.0 2158.8,2197.0 2164.8,2197.0 2170.8,2197.0 2176.8,2197.0 2182.8,2197.0 2188.8,2221.0 2194.8,2221.0 2200.8,2221.0 2206.8,2221.0 2212.8,2221.0 2218.8,2221.0 2224.8,2197.0 2230.8,2197.0 2236.8,2197.0 2242.8,2197.0 2248.8,2221.0 2254.8,2221.0 2260.8,2221.0 2266.8,2221.0 2272.8,2221.0 2278.8,2221.0 2284.8,2245.0 2290.8,2245.0 2296.8,2245.0 2302.8,2245.0 2308.8,2149.0 2314.8,2149.0 2320.8,2149.0 2326.8,2149.0 2332.8,2173.0 2338.8,2173.0 2344.8,2173.0 2350.8,2173.0 2356.8,2173.0 2362.8,2173.0 2368.8,2173.0 2374.8,2245.0 2380.8,2245.0 2386.8,2245.0 2392.8,2149.0 2398.8,2149.0 2404.8,2149.0 2410.8,2149.0 2416.8,2149.0 2422.8,2149.0 2428.8,2197.0 2434.8,2197.0 2440.8,2197.0 2446.8,2197.0 2452.8,2197.0 2458.8,2197.0 2464.8,2173.0 2470.8,2173.0 2476.8,2173.0 2482.8,2173.0 2488.8,2245.0 2494.8,2245.0 2500.8,2245.0 2506.8,2245.0 2512.8,2245.0 2518.8,2245.0 2524.8,2173.0 2530.8,2173.0 2536.8,2173.0 2542.8,2173.0 2548.8,2173.0 2554.8,2173.0 2560.8,2197.0 2566.8,2197.0 2572.8,2197.0 2578.8,2197.0 2584.8,2197.0 2590.8,2245.0 2596.8,2245.0 2602.8,2245.0 2608.8,2245.0 2614.8,2245.0 2620.8,2245.0 2626.8,2173.0 2632.8,2173.0 2638.8,2173.0 2644.8,2149.0 2650.8,2149.0 2656.8,2149.0 2662.8,2149.0 2668.8,2149.0 2674.8,2149.0 2680.8,2149.0 2686.8,2149.0 2692.8,2149.0 2698.8,2197.0 2704.8,2197.0 2710.8,2197.0 2716.8,2197.0 2722.8,2197.0 2728.8,2197.0 2734.8,2197.0 2740.8,2173.0 2746.8,2173.0 2752.8,2173.0 2758.8,2173.0 2764.8,2173.0 2770.8,2173.0 2776.8,2173.0 2782.8,2173.0 2788.8,2173.0 2794.8,2173.0 2800.8,2173.0 2806.8,2173.0 2812.8,2173.0 2818.8,2173.0 2824.8,2149.0 2830.8,2149.0 2836.8,2149.0 2842.8,2149.0 2848.8,2221.0 2854.8,2221.0 2860.8,2221.0 2866.8,2221.0 2872.8,2221.0 2878.8,2197.0 2884.8,2197.0 2890.8,2197.0"/><polyline fill="none" stroke="#f2cc0c" stroke-width="2.0" stroke-linejoin="round" points="1630.8,2173.0 1636.8,2173.0 1642.8,2173.0 1648.8,2173.0 1654.8,2149.0 1660.8,2149.0 1666.8,2149.0 1672.8,2149.0 1678.8,2149.0 1684.8,2149.0 1690.8,2173.0 1696.8,2173.0 1702.8,2173.0 1708.8,2221.0 1714.8,2221.0 1720.8,2221.0 1726.8,2221.0 1732.8,2221.0 1738.8,2221.0 1744.8,2221.0 1750.8,2221.0 1756.8,2173.0 1762.8,2173.0 1768.8,2173.0 1774.8,2173.0 1780.8,2173.0 1786.8,2173.0 1792.8,2173.0 1798.8,2173.0 1804.8,2173.0 1810.8,2173.0 1816.8,2173.0 1822.8,2173.0 1828.8,2173.0 1834.8,2173.0 1840.8,2173.0 1846.8,2173.0 1852.8,2173.0 1858.8,2221.0 1864.8,2221.0 1870.8,2221.0 1876.8,2221.0 1882.8,2221.0 1888.8,2221.0 1894.8,2221.0 1900.8,2221.0 1906.8,2221.0 1912.8,2197.0 1918.8,2197.0 1924.8,2197.0 1930.8,2221.0 1936.8,2221.0 1942.8,2221.0 1948.8,2221.0 1954.8,2221.0 1960.8,2197.0 1966.8,2197.0 1972.8,2197.0 1978.8,2197.0 1984.8,2245.0 1990.8,2245.0 1996.8,2245.0 2002.8,2245.0 2008.8,2245.0 2014.8,2245.0 2020.8,2245.0 2026.8,2197.0 2032.8,2197.0 2038.8,2197.0 2044.8,2197.0 2050.8,2197.0 2056.8,2197.0 2062.8,2197.0 2068.8,2149.0 2074.8,2149.0 2080.8,2149.0 2086.8,2149.0 2092.8,2149.0 2098.8,2221.0 2104.8,2221.0 2110.8,2221.0 2116.8,2221.0 2122.8,2221.0 2128.8,2173.0 2134.8,2173.0 2140.8,2173.0 2146.8,2173.0 2152.8,2173.0 2158.8,2173.0 2164.8,2173.0 2170.8,2173.0 2176.8,2173.0 2182.8,2173.0 2188.8,2173.0 2194.8,2173.0 2200.8,2173.0 2206.8,2149.0 2212.8,2149.0 2218.8,2149.0 2224.8,2149.0 2230.8,2149.0 2236.8,2221.0 2242.8,2221.0 2248.8,2221.0 2254.8,2221.0 2260.8,2197.0 2266.8,2197.0 2272.8,2197.0 2278.8,2197.0 2284.8,2197.0 2290.8,2197.0 2296.8,2197.0 2302.8,2197.0 2308.8,2197.0 2314.8,2197.0 2320.8,2197.0 2326.8,2197.0 2332.8,2197.0 2338.8,2197.0 2344.8,2197.0 2350.8,2197.0 2356.8,2197.0 2362.8,2197.0 2368.8,2197.0 2374.8,2197.0 2380.8,2245.0 2386.8,2245.0 2392.8,2245.0 2398.8,2245.0 2404.8,2245.0 2410.8,2245.0 2416.8,2221.0 2422.8,2221.0 2428.8,2221.0 2434.8,2221.0 2440.8,2173.0 2446.8,2173.0 2452.8,2173.0 2458.8,2173.0 2464.8,2173.0 2470.8,2197.0 2476.8,2197.0 2482.8,2197.0 2488.8,2173.0 2494.8,2173.0 2500.8,2173.0 2506.8,2173.0 2512.8,2173.0 2518.8,2173.0 2524.8,2173.0 2530.8,2197.0 2536.8,2197.0 2542.8,2197.0 2548.8,2197.0 2554.8,2197.0 2560.8,2197.0 2566.8,2266.0 2572.8,2266.0 2578.8,2197.0 2584.8,2197.0 2590.8,2197.0 2596.8,2197.0 2602.8,2197.0 2608.8,2197.0 2614.8,2197.0 2620.8,2197.0 2626.8,2197.0 2632.8,2245.0 2638.8,2245.0 2644.8,2245.0 2650.8,2245.0 2656.8,2245.0 2662.8,2149.0 2668.8,2149.0 2674.8,2149.0 2680.8,2149.0 2686.8,2149.0 2692.8,2149.0 2698.8,2149.0 2704.8,2149.0 2710.8,2149.0 2716.8,2149.0 2722.8,2197.0 2728.8,2197.0 2734.8,2197.0 2740.8,2197.0 2746.8,2197.0 2752.8,2197.0 2758.8,2149.0 2764.8,2149.0 2770.8,2149.0 2776.8,2149.0 2782.8,2149.0 2788.8,2149.0 2794.8,2245.0 2800.8,2245.0 2806.8,2245.0 2812.8,2245.0 2818.8,2149.0 2824.8,2149.0 2830.8,2149.0 2836.8,2149.0 2842.8,2149.0 2848.8,2149.0 2854.8,2197.0 2860.8,2197.0 2866.8,2197.0 2872.8,2197.0 2878.8,2197.0 2884.8,2245.0 2890.8,2245.0"/><polyline fill="none" stroke="#8ab8ff" stroke-width="2.0" stroke-linejoin="round" points="1630.8,2197.0 1636.8,2197.0 1642.8,2197.0 1648.8,2149.0 1654.8,2149.0 1660.8,2149.0 1666.8,2149.0 1672.8,2149.0 1678.8,2197.0 1684.8,2197.0 1690.8,2197.0 1696.8,2197.0 1702.8,2197.0 1708.8,2197.0 1714.8,2197.0 1720.8,2197.0 1726.8,2197.0 1732.8,2197.0 1738.8,2197.0 1744.8,2173.0 1750.8,2173.0 1756.8,2173.0 1762.8,2173.0 1768.8,2173.0 1774.8,2173.0 1780.8,2173.0 1786.8,2173.0 1792.8,2173.0 1798.8,2245.0 1804.8,2245.0 1810.8,2245.0 1816.8,2149.0 1822.8,2149.0 1828.8,2149.0 1834.8,2149.0 1840.8,2149.0 1846.8,2149.0 1852.8,2197.0 1858.8,2197.0 1864.8,2197.0 1870.8,2197.0 1876.8,2197.0 1882.8,2197.0 1888.8,2197.0 1894.8,2221.0 1900.8,2221.0 1906.8,2221.0 1912.8,2221.0 1918.8,2221.0 1924.8,2221.0 1930.8,2197.0 1936.8,2197.0 1942.8,2197.0 1948.8,2173.0 1954.8,2173.0 1960.8,2173.0 1966.8,2221.0 1972.8,2221.0 1978.8,2221.0 1984.8,2221.0 1990.8,2221.0 1996.8,2221.0 2002.8,2221.0 2008.8,2221.0 2014.8,2221.0 2020.8,2197.0 2026.8,2197.0 2032.8,2197.0 2038.8,2197.0 2044.8,2197.0 2050.8,2245.0 2056.8,2245.0 2062.8,2245.0 2068.8,2245.0 2074.8,2245.0 2080.8,2221.0 2086.8,2221.0 2092.8,2221.0 2098.8,2221.0 2104.8,2221.0 2110.8,2197.0 2116.8,2197.0 2122.8,2197.0 2128.8,2197.0 2134.8,2197.0 2140.8,2197.0 2146.8,2173.0 2152.8,2173.0 2158.8,2173.0 2164.8,2173.0 2170.8,2173.0 2176.8,2173.0 2182.8,2221.0 2188.8,2221.0 2194.8,2221.0 2200.8,2221.0 2206.8,2221.0 2212.8,2221.0 2218.8,2221.0 2224.8,2221.0 2230.8,2221.0 2236.8,2221.0 2242.8,2173.0 2248.8,2173.0 2254.8,2173.0 2260.8,2173.0 2266.8,2197.0 2272.8,2197.0 2278.8,2197.0 2284.8,2197.0 2290.8,2197.0 2296.8,2197.0 2302.8,2197.0 2308.8,2173.0 2314.8,2173.0 2320.8,2173.0 2326.8,2149.0 2332.8,2149.0 2338.8,2149.0 2344.8,2149.0 2350.8,2149.0 2356.8,2149.0 2362.8,2149.0 2368.8,2149.0 2374.8,2149.0 2380.8,2149.0 2386.8,2149.0 2392.8,2245.0 2398.8,2245.0 2404.8,2245.0 2410.8,2245.0 2416.8,2245.0 2422.8,2221.0 2428.8,2221.0 2434.8,2221.0 2440.8,2221.0 2446.8,2221.0 2452.8,2149.0 2458.8,2149.0 2464.8,2149.0 2470.8,2149.0 2476.8,2149.0 2482.8,2197.0 2488.8,2197.0 2494.8,2197.0 2500.8,2197.0 2506.8,2197.0 2512.8,2197.0 2518.8,2197.0 2524.8,2197.0 2530.8,2197.0 2536.8,2197.0 2542.8,2197.0 2548.8,2149.0 2554.8,2149.0 2560.8,2149.0 2566.8,2149.0 2572.8,2149.0 2578.8,2149.0 2584.8,2149.0 2590.8,2221.0 2596.8,2126.0 2602.8,2126.0 2608.8,2126.0 2614.8,2221.0 2620.8,2221.0 2626.8,2173.0 2632.8,2173.0 2638.8,2173.0 2644.8,2173.0 2650.8,2173.0 2656.8,2173.0 2662.8,2173.0 2668.8,2149.0 2674.8,2149.0 2680.8,2149.0 2686.8,2149.0 2692.8,2149.0 2698.8,2149.0 2704.8,2149.0 2710.8,2149.0 2716.8,2126.0 2722.8,2126.0 2728.8,2126.0 2734.8,2149.0 2740.8,2149.0 2746.8,2173.0 2752.8,2173.0 2758.8,2173.0 2764.8,2149.0 2770.8,2149.0 2776.8,2149.0 2782.8,2149.0 2788.8,2149.0 2794.8,2149.0 2800.8,2197.0 2806.8,2197.0 2812.8,2197.0 2818.8,2197.0 2824.8,2221.0 2830.8,2221.0 2836.8,2221.0 2842.8,2245.0 2848.8,2245.0 2854.8,2245.0 2860.8,2197.0 2866.8,2197.0 2872.8,2197.0 2878.8,2197.0 2884.8,2197.0 2890.8,2197.0"/><polyline fill="none" stroke="#ff780a" stroke-width="2.0" stroke-linejoin="round" points="1630.8,2221.0 1636.8,2221.0 1642.8,2221.0 1648.8,2221.0 1654.8,2221.0 1660.8,2221.0 1666.8,2221.0 1672.8,2173.0 1678.8,2173.0 1684.8,2173.0 1690.8,2173.0 1696.8,2173.0 1702.8,2173.0 1708.8,2173.0 1714.8,2221.0 1720.8,2221.0 1726.8,2221.0 1732.8,2221.0 1738.8,2221.0 1744.8,2221.0 1750.8,2221.0 1756.8,2221.0 1762.8,2221.0 1768.8,2221.0 1774.8,2221.0 1780.8,2221.0 1786.8,2197.0 1792.8,2197.0 1798.8,2197.0 1804.8,2149.0 1810.8,2149.0 1816.8,2149.0 1822.8,2149.0 1828.8,2245.0 1834.8,2245.0 1840.8,2245.0 1846.8,2245.0 1852.8,2245.0 1858.8,2245.0 1864.8,2221.0 1870.8,2221.0 1876.8,2221.0 1882.8,2221.0 1888.8,2221.0 1894.8,2221.0 1900.8,2245.0 1906.8,2245.0 1912.8,2245.0 1918.8,2221.0 1924.8,2221.0 1930.8,2221.0 1936.8,2221.0 1942.8,2221.0 1948.8,2245.0 1954.8,2245.0 1960.8,2245.0 1966.8,2245.0 1972.8,2221.0 1978.8,2221.0 1984.8,2221.0 1990.8,2221.0 1996.8,2221.0 2002.8,2149.0 2008.8,2149.0 2014.8,2149.0 2020.8,2149.0 2026.8,2149.0 2032.8,2221.0 2038.8,2221.0 2044.8,2221.0 2050.8,2245.0 2056.8,2245.0 2062.8,2245.0 2068.8,2245.0 2074.8,2245.0 2080.8,2197.0 2086.8,2266.0 2092.8,2266.0 2098.8,2266.0 2104.8,2173.0 2110.8,2173.0 2116.8,2173.0 2122.8,2221.0 2128.8,2221.0 2134.8,2221.0 2140.8,2221.0 2146.8,2221.0 2152.8,2221.0 2158.8,2221.0 2164.8,2221.0 2170.8,2221.0 2176.8,2221.0 2182.8,2245.0 2188.8,2245.0 2194.8,2245.0 2200.8,2245.0 2206.8,2245.0 2212.8,2197.0 2218.8,2197.0 2224.8,2197.0 2230.8,2197.0 2236.8,2197.0 2242.8,2245.0 2248.8,2245.0 2254.8,2245.0 2260.8,2197.0 2266.8,2197.0 2272.8,2197.0 2278.8,2197.0 2284.8,2221.0 2290.8,2221.0 2296.8,2221.0 2302.8,2221.0 2308.8,2221.0 2314.8,2197.0 2320.8,2197.0 2326.8,2197.0 2332.8,2197.0 2338.8,2197.0 2344.8,2197.0 2350.8,2197.0 2356.8,2245.0 2362.8,2245.0 2368.8,2245.0 2374.8,2245.0 2380.8,2197.0 2386.8,2197.0 2392.8,2197.0 2398.8,2197.0 2404.8,2197.0 2410.8,2245.0 2416.8,2245.0 2422.8,2245.0 2428.8,2245.0 2434.8,2197.0 2440.8,2197.0 2446.8,2197.0 2452.8,2197.0 2458.8,2149.0 2464.8,2149.0 2470.8,2149.0 2476.8,2149.0 2482.8,2173.0 2488.8,2173.0 2494.8,2173.0 2500.8,2173.0 2506.8,2173.0 2512.8,2173.0 2518.8,2173.0 2524.8,2221.0 2530.8,2221.0 2536.8,2221.0 2542.8,2221.0 2548.8,2221.0 2554.8,2221.0 2560.8,2173.0 2566.8,2173.0 2572.8,2173.0 2578.8,2173.0 2584.8,2173.0 2590.8,2197.0 2596.8,2197.0 2602.8,2197.0 2608.8,2197.0 2614.8,2197.0 2620.8,2197.0 2626.8,2197.0 2632.8,2197.0 2638.8,2197.0 2644.8,2197.0 2650.8,2197.0 2656.8,2173.0 2662.8,2173.0 2668.8,2173.0 2674.8,2173.0 2680.8,2221.0 2686.8,2221.0 2692.8,2221.0 2698.8,2221.0 2704.8,2221.0 2710.8,2221.0 2716.8,2197.0 2722.8,2197.0 2728.8,2197.0 2734.8,2197.0 2740.8,2245.0 2746.8,2245.0 2752.8,2245.0 2758.8,2149.0 2764.8,2149.0 2770.8,2149.0 2776.8,2149.0 2782.8,2149.0 2788.8,2149.0 2794.8,2221.0 2800.8,2221.0 2806.8,2221.0 2812.8,2221.0 2818.8,2221.0 2824.8,2221.0 2830.8,2197.0 2836.8,2197.0 2842.8,2197.0 2848.8,2149.0 2854.8,2149.0 2860.8,2149.0 2866.8,2149.0 2872.8,2149.0 2878.8,2221.0 2884.8,2221.0 2890.8,2221.0"/><polyline fill="none" stroke="#f2495c" stroke-width="2.0" stroke-linejoin="round" points="1630.8,2221.0 1636.8,2221.0 1642.8,2221.0 1648.8,2173.0 1654.8,2173.0 1660.8,2173.0 1666.8,2173.0 1672.8,2173.0 1678.8,2221.0 1684.8,2221.0 1690.8,2221.0 1696.8,2245.0 1702.8,2245.0 1708.8,2245.0 1714.8,2245.0 1720.8,2245.0 1726.8,2149.0 1732.8,2149.0 1738.8,2149.0 1744.8,2149.0 1750.8,2149.0 1756.8,2149.0 1762.8,2149.0 1768.8,2197.0 1774.8,2197.0 1780.8,2197.0 1786.8,2197.0 1792.8,2197.0 1798.8,2197.0 1804.8,2197.0 1810.8,2245.0 1816.8,2245.0 1822.8,2245.0 1828.8,2245.0 1834.8,2245.0 1840.8,2245.0 1846.8,2245.0 1852.8,2221.0 1858.8,2221.0 1864.8,2221.0 1870.8,2221.0 1876.8,2197.0 1882.8,2197.0 1888.8,2197.0 1894.8,2197.0 1900.8,2197.0 1906.8,2197.0 1912.8,2197.0 1918.8,2173.0 1924.8,2173.0 1930.8,2173.0 1936.8,2173.0 1942.8,2197.0 1948.8,2197.0 1954.8,2197.0 1960.8,2197.0 1966.8,2197.0 1972.8,2197.0 1978.8,2197.0 1984.8,2197.0 1990.8,2197.0 1996.8,2197.0 2002.8,2245.0 2008.8,2245.0 2014.8,2245.0 2020.8,2221.0 2026.8,2221.0 2032.8,2221.0 2038.8,2221.0 2044.8,2221.0 2050.8,2197.0 2056.8,2197.0 2062.8,2197.0 2068.8,2197.0 2074.8,2221.0 2080.8,2221.0 2086.8,2221.0 2092.8,2221.0 2098.8,2221.0 2104.8,2221.0 2110.8,2221.0 2116.8,2197.0 2122.8,2197.0 2128.8,2197.0 2134.8,2197.0 2140.8,2197.0 2146.8,2197.0 2152.8,2197.0 2158.8,2197.0 2164.8,2197.0 2170.8,2197.0 2176.8,2221.0 2182.8,2221.0 2188.8,2221.0 2194.8,2197.0 2200.8,2197.0 2206.8,2197.0 2212.8,2221.0 2218.8,2221.0 2224.8,2221.0 2230.8,2221.0 2236.8,2221.0 2242.8,2221.0 2248.8,2221.0 2254.8,2221.0 2260.8,2221.0 2266.8,2221.0 2272.8,2221.0 2278.8,2197.0 2284.8,2197.0 2290.8,2197.0 2296.8,2197.0 2302.8,2197.0 2308.8,2197.0 2314.8,2221.0 2320.8,2221.0 2326.8,2221.0 2332.8,2221.0 2338.8,2221.0 2344.8,2221.0 2350.8,2197.0 2356.8,2197.0 2362.8,2197.0 2368.8,2197.0 2374.8,2197.0 2380.8,2197.0 2386.8,2173.0 2392.8,2173.0 2398.8,2173.0 2404.8,2245.0 2410.8,2245.0 2416.8,2245.0 2422.8,2245.0 2428.8,2245.0 2434.8,2245.0 2440.8,2221.0 2446.8,2221.0 2452.8,2221.0 2458.8,2221.0 2464.8,2221.0 2470.8,2221.0 2476.8,2149.0 2482.8,2149.0 2488.8,2149.0 2494.8,2149.0 2500.8,2197.0 2506.8,2197.0 2512.8,2197.0 2518.8,2197.0 2524.8,2197.0 2530.8,2197.0 2536.8,2197.0 2542.8,2197.0 2548.8,2197.0 2554.8,2197.0 2560.8,2245.0 2566.8,2245.0 2572.8,2245.0 2578.8,2149.0 2584.8,2149.0 2590.8,2149.0 2596.8,2149.0 2602.8,2245.0 2608.8,2245.0 2614.8,2245.0 2620.8,2245.0 2626.8,2173.0 2632.8,2173.0 2638.8,2173.0 2644.8,2173.0 2650.8,2245.0 2656.8,2245.0 2662.8,2245.0 2668.8,2245.0 2674.8,2245.0 2680.8,2173.0 2686.8,2173.0 2692.8,2173.0 2698.8,2173.0 2704.8,2173.0 2710.8,2173.0 2716.8,2173.0 2722.8,2245.0 2728.8,2245.0 2734.8,2245.0 2740.8,2245.0 2746.8,2245.0 2752.8,2245.0 2758.8,2245.0 2764.8,2197.0 2770.8,2197.0 2776.8,2197.0 2782.8,2197.0 2788.8,2197.0 2794.8,2173.0 2800.8,2173.0 2806.8,2173.0 2812.8,2173.0 2818.8,2173.0 2824.8,2173.0 2830.8,2197.0 2836.8,2197.0 2842.8,2197.0 2848.8,2197.0 2854.8,2197.0 2860.8,2197.0 2866.8,2221.0 2872.8,2221.0 2878.8,2221.0 2884.8,2221.0 2890.8,2221.0"/></svg>
</body></html>
